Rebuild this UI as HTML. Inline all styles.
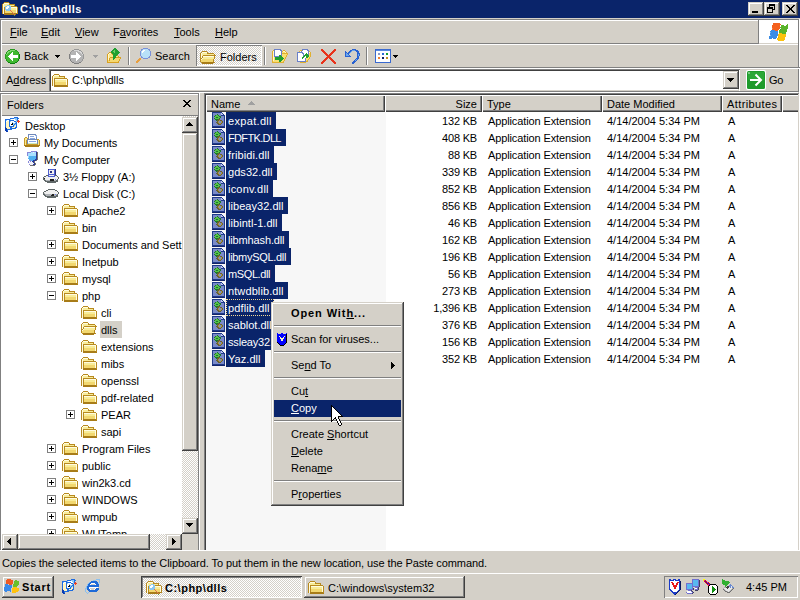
<!DOCTYPE html>
<html><head><meta charset="utf-8"><style>
html,body{margin:0;padding:0;width:800px;height:600px;overflow:hidden;background:#D4D0C8;}
body{position:relative;font-family:"Liberation Sans", sans-serif;font-size:11px;color:#000;}
.t{position:absolute;white-space:nowrap;}
.sel{background:#0A246A;color:#fff;}
u{text-decoration:underline;text-underline-offset:1px;}
</style></head><body>
<svg width="0" height="0" style="position:absolute">
<symbol id="folder" viewBox="0 0 16 16" shape-rendering="crispEdges"><rect x="2" y="2" width="5" height="1" fill="#B88A20"/><rect x="1" y="3" width="1" height="1" fill="#B88A20"/><rect x="2" y="3" width="5" height="1" fill="#FFFCE0"/><rect x="7" y="3" width="1" height="1" fill="#B88A20"/><rect x="0" y="4" width="1" height="1" fill="#B88A20"/><rect x="1" y="4" width="1" height="1" fill="#FFFCE0"/><rect x="2" y="4" width="5" height="1" fill="#F8EC98"/><rect x="7" y="4" width="6" height="1" fill="#B88A20"/><rect x="0" y="5" width="1" height="1" fill="#B88A20"/><rect x="1" y="5" width="1" height="1" fill="#FFFCE0"/><rect x="2" y="5" width="10" height="1" fill="#F8EC98"/><rect x="12" y="5" width="1" height="1" fill="#B88A20"/><rect x="0" y="6" width="1" height="1" fill="#B88A20"/><rect x="1" y="6" width="1" height="1" fill="#FFFCE0"/><rect x="2" y="6" width="13" height="1" fill="#B88A20"/><rect x="0" y="7" width="1" height="1" fill="#B88A20"/><rect x="1" y="7" width="1" height="1" fill="#FFFCE0"/><rect x="2" y="7" width="1" height="1" fill="#B88A20"/><rect x="3" y="7" width="12" height="1" fill="#FFFCE0"/><rect x="15" y="7" width="1" height="1" fill="#B88A20"/><rect x="0" y="8" width="1" height="1" fill="#B88A20"/><rect x="1" y="8" width="1" height="1" fill="#FFFCE0"/><rect x="2" y="8" width="1" height="1" fill="#B88A20"/><rect x="3" y="8" width="11" height="1" fill="#F8EC98"/><rect x="14" y="8" width="1" height="1" fill="#FFFCE0"/><rect x="15" y="8" width="1" height="1" fill="#B88A20"/><rect x="0" y="9" width="1" height="1" fill="#B88A20"/><rect x="1" y="9" width="1" height="1" fill="#FFFCE0"/><rect x="2" y="9" width="1" height="1" fill="#B88A20"/><rect x="3" y="9" width="11" height="1" fill="#F8EC98"/><rect x="14" y="9" width="1" height="1" fill="#FFFCE0"/><rect x="15" y="9" width="1" height="1" fill="#B88A20"/><rect x="0" y="10" width="1" height="1" fill="#B88A20"/><rect x="1" y="10" width="1" height="1" fill="#FFFCE0"/><rect x="2" y="10" width="1" height="1" fill="#B88A20"/><rect x="3" y="10" width="11" height="1" fill="#F2D870"/><rect x="14" y="10" width="1" height="1" fill="#FFFCE0"/><rect x="15" y="10" width="1" height="1" fill="#B88A20"/><rect x="0" y="11" width="1" height="1" fill="#B88A20"/><rect x="1" y="11" width="1" height="1" fill="#FFFCE0"/><rect x="2" y="11" width="1" height="1" fill="#B88A20"/><rect x="3" y="11" width="11" height="1" fill="#F2D870"/><rect x="14" y="11" width="1" height="1" fill="#FFFCE0"/><rect x="15" y="11" width="1" height="1" fill="#B88A20"/><rect x="0" y="12" width="1" height="1" fill="#B88A20"/><rect x="1" y="12" width="1" height="1" fill="#FFFCE0"/><rect x="2" y="12" width="1" height="1" fill="#B88A20"/><rect x="3" y="12" width="11" height="1" fill="#F2D870"/><rect x="14" y="12" width="1" height="1" fill="#FFFCE0"/><rect x="15" y="12" width="1" height="1" fill="#B88A20"/><rect x="0" y="13" width="1" height="1" fill="#B88A20"/><rect x="1" y="13" width="1" height="1" fill="#FFFCE0"/><rect x="2" y="13" width="13" height="1" fill="#A87C18"/><rect x="15" y="13" width="1" height="1" fill="#B88A20"/><rect x="2" y="14" width="14" height="1" fill="#A87C18"/></symbol>
<symbol id="folderopen" viewBox="0 0 16 16" shape-rendering="crispEdges"><rect x="2" y="1" width="5" height="1" fill="#B88A20"/><rect x="1" y="2" width="1" height="1" fill="#B88A20"/><rect x="2" y="2" width="5" height="1" fill="#FFFCE0"/><rect x="7" y="2" width="1" height="1" fill="#B88A20"/><rect x="0" y="3" width="1" height="1" fill="#B88A20"/><rect x="1" y="3" width="1" height="1" fill="#FFFCE0"/><rect x="2" y="3" width="5" height="1" fill="#F8EC98"/><rect x="7" y="3" width="7" height="1" fill="#B88A20"/><rect x="0" y="4" width="1" height="1" fill="#B88A20"/><rect x="1" y="4" width="1" height="1" fill="#FFFCE0"/><rect x="2" y="4" width="12" height="1" fill="#F8EC98"/><rect x="14" y="4" width="1" height="1" fill="#B88A20"/><rect x="0" y="5" width="1" height="1" fill="#B88A20"/><rect x="1" y="5" width="1" height="1" fill="#FFFCE0"/><rect x="2" y="5" width="1" height="1" fill="#F8EC98"/><rect x="3" y="5" width="13" height="1" fill="#B88A20"/><rect x="0" y="6" width="1" height="1" fill="#B88A20"/><rect x="1" y="6" width="1" height="1" fill="#FFFCE0"/><rect x="2" y="6" width="1" height="1" fill="#B88A20"/><rect x="3" y="6" width="11" height="1" fill="#FFFCE0"/><rect x="14" y="6" width="1" height="1" fill="#B88A20"/><rect x="0" y="7" width="1" height="1" fill="#B88A20"/><rect x="1" y="7" width="1" height="1" fill="#FFFCE0"/><rect x="2" y="7" width="1" height="1" fill="#B88A20"/><rect x="3" y="7" width="11" height="1" fill="#F8EC98"/><rect x="14" y="7" width="1" height="1" fill="#B88A20"/><rect x="0" y="8" width="2" height="1" fill="#B88A20"/><rect x="2" y="8" width="1" height="1" fill="#FFFCE0"/><rect x="3" y="8" width="11" height="1" fill="#F8EC98"/><rect x="14" y="8" width="1" height="1" fill="#B88A20"/><rect x="0" y="9" width="1" height="1" fill="#B88A20"/><rect x="1" y="9" width="1" height="1" fill="#FFFCE0"/><rect x="2" y="9" width="11" height="1" fill="#F2D870"/><rect x="13" y="9" width="1" height="1" fill="#B88A20"/><rect x="0" y="10" width="1" height="1" fill="#B88A20"/><rect x="1" y="10" width="12" height="1" fill="#F2D870"/><rect x="13" y="10" width="1" height="1" fill="#B88A20"/><rect x="0" y="11" width="1" height="1" fill="#B88A20"/><rect x="1" y="11" width="12" height="1" fill="#F2D870"/><rect x="13" y="11" width="1" height="1" fill="#B88A20"/><rect x="1" y="12" width="1" height="1" fill="#B88A20"/><rect x="2" y="12" width="12" height="1" fill="#A87C18"/><rect x="14" y="12" width="1" height="1" fill="#B88A20"/><rect x="2" y="13" width="11" height="1" fill="#A87C18"/></symbol>
<symbol id="dll" viewBox="0 0 16 16" shape-rendering="crispEdges"><rect x="1" y="0" width="10" height="1" fill="#1E3A8A"/><rect x="1" y="1" width="1" height="1" fill="#1E3A8A"/><rect x="2" y="1" width="8" height="1" fill="#7A8AC8"/><rect x="10" y="1" width="1" height="1" fill="#B8C4F0"/><rect x="11" y="1" width="1" height="1" fill="#1E3A8A"/><rect x="1" y="2" width="1" height="1" fill="#1E3A8A"/><rect x="2" y="2" width="4" height="1" fill="#7A8AC8"/><rect x="6" y="2" width="1" height="1" fill="#1A7A2A"/><rect x="7" y="2" width="3" height="1" fill="#7A8AC8"/><rect x="10" y="2" width="2" height="1" fill="#B8C4F0"/><rect x="12" y="2" width="1" height="1" fill="#1E3A8A"/><rect x="1" y="3" width="1" height="1" fill="#1E3A8A"/><rect x="2" y="3" width="2" height="1" fill="#7A8AC8"/><rect x="4" y="3" width="1" height="1" fill="#1A7A2A"/><rect x="5" y="3" width="2" height="1" fill="#58C048"/><rect x="7" y="3" width="1" height="1" fill="#1A7A2A"/><rect x="8" y="3" width="2" height="1" fill="#7A8AC8"/><rect x="10" y="3" width="4" height="1" fill="#1E3A8A"/><rect x="1" y="4" width="1" height="1" fill="#1E3A8A"/><rect x="2" y="4" width="1" height="1" fill="#7A8AC8"/><rect x="3" y="4" width="1" height="1" fill="#1A7A2A"/><rect x="4" y="4" width="4" height="1" fill="#58C048"/><rect x="8" y="4" width="2" height="1" fill="#1A7A2A"/><rect x="10" y="4" width="3" height="1" fill="#7A8AC8"/><rect x="13" y="4" width="1" height="1" fill="#1E3A8A"/><rect x="1" y="5" width="1" height="1" fill="#1E3A8A"/><rect x="2" y="5" width="2" height="1" fill="#7A8AC8"/><rect x="4" y="5" width="1" height="1" fill="#58C048"/><rect x="5" y="5" width="2" height="1" fill="#1A7A2A"/><rect x="7" y="5" width="2" height="1" fill="#58C048"/><rect x="9" y="5" width="1" height="1" fill="#1A7A2A"/><rect x="10" y="5" width="3" height="1" fill="#7A8AC8"/><rect x="13" y="5" width="1" height="1" fill="#1E3A8A"/><rect x="1" y="6" width="1" height="1" fill="#1E3A8A"/><rect x="2" y="6" width="1" height="1" fill="#7A8AC8"/><rect x="3" y="6" width="1" height="1" fill="#1A7A2A"/><rect x="4" y="6" width="4" height="1" fill="#58C048"/><rect x="8" y="6" width="1" height="1" fill="#1A7A2A"/><rect x="9" y="6" width="4" height="1" fill="#7A8AC8"/><rect x="13" y="6" width="1" height="1" fill="#1E3A8A"/><rect x="1" y="7" width="1" height="1" fill="#1E3A8A"/><rect x="2" y="7" width="2" height="1" fill="#7A8AC8"/><rect x="4" y="7" width="3" height="1" fill="#1A7A2A"/><rect x="7" y="7" width="2" height="1" fill="#6A6030"/><rect x="9" y="7" width="4" height="1" fill="#7A8AC8"/><rect x="13" y="7" width="1" height="1" fill="#1E3A8A"/><rect x="1" y="8" width="1" height="1" fill="#1E3A8A"/><rect x="2" y="8" width="3" height="1" fill="#7A8AC8"/><rect x="5" y="8" width="1" height="1" fill="#1A7A2A"/><rect x="6" y="8" width="2" height="1" fill="#6A6030"/><rect x="8" y="8" width="1" height="1" fill="#A89848"/><rect x="9" y="8" width="2" height="1" fill="#6A6030"/><rect x="11" y="8" width="2" height="1" fill="#7A8AC8"/><rect x="13" y="8" width="1" height="1" fill="#1E3A8A"/><rect x="1" y="9" width="1" height="1" fill="#1E3A8A"/><rect x="2" y="9" width="4" height="1" fill="#7A8AC8"/><rect x="6" y="9" width="1" height="1" fill="#6A6030"/><rect x="7" y="9" width="1" height="1" fill="#A89848"/><rect x="8" y="9" width="2" height="1" fill="#7A8AC8"/><rect x="10" y="9" width="1" height="1" fill="#A89848"/><rect x="11" y="9" width="1" height="1" fill="#6A6030"/><rect x="12" y="9" width="1" height="1" fill="#7A8AC8"/><rect x="13" y="9" width="1" height="1" fill="#1E3A8A"/><rect x="1" y="10" width="1" height="1" fill="#1E3A8A"/><rect x="2" y="10" width="3" height="1" fill="#7A8AC8"/><rect x="5" y="10" width="2" height="1" fill="#6A6030"/><rect x="7" y="10" width="1" height="1" fill="#A89848"/><rect x="8" y="10" width="2" height="1" fill="#7A8AC8"/><rect x="10" y="10" width="1" height="1" fill="#A89848"/><rect x="11" y="10" width="1" height="1" fill="#6A6030"/><rect x="12" y="10" width="1" height="1" fill="#7A8AC8"/><rect x="13" y="10" width="1" height="1" fill="#1E3A8A"/><rect x="1" y="11" width="1" height="1" fill="#1E3A8A"/><rect x="2" y="11" width="4" height="1" fill="#7A8AC8"/><rect x="6" y="11" width="2" height="1" fill="#6A6030"/><rect x="8" y="11" width="2" height="1" fill="#A89848"/><rect x="10" y="11" width="1" height="1" fill="#6A6030"/><rect x="11" y="11" width="2" height="1" fill="#7A8AC8"/><rect x="13" y="11" width="1" height="1" fill="#1E3A8A"/><rect x="1" y="12" width="1" height="1" fill="#1E3A8A"/><rect x="2" y="12" width="5" height="1" fill="#7A8AC8"/><rect x="7" y="12" width="3" height="1" fill="#6A6030"/><rect x="10" y="12" width="3" height="1" fill="#7A8AC8"/><rect x="13" y="12" width="1" height="1" fill="#1E3A8A"/><rect x="1" y="13" width="1" height="1" fill="#1E3A8A"/><rect x="2" y="13" width="11" height="1" fill="#7A8AC8"/><rect x="13" y="13" width="1" height="1" fill="#1E3A8A"/><rect x="1" y="14" width="13" height="1" fill="#1E3A8A"/><rect x="1" y="15" width="13" height="1" fill="#14246A"/></symbol>
<symbol id="explorer" viewBox="0 0 16 16" shape-rendering="crispEdges"><rect x="2" y="0" width="5" height="1" fill="#B88A20"/><rect x="1" y="1" width="1" height="1" fill="#B88A20"/><rect x="2" y="1" width="5" height="1" fill="#FFFCE0"/><rect x="7" y="1" width="1" height="1" fill="#B88A20"/><rect x="0" y="2" width="1" height="1" fill="#B88A20"/><rect x="1" y="2" width="1" height="1" fill="#FFFCE0"/><rect x="2" y="2" width="5" height="1" fill="#F8EC98"/><rect x="7" y="2" width="6" height="1" fill="#B88A20"/><rect x="0" y="3" width="1" height="1" fill="#B88A20"/><rect x="1" y="3" width="1" height="1" fill="#FFFCE0"/><rect x="2" y="3" width="3" height="1" fill="#F8EC98"/><rect x="5" y="3" width="3" height="1" fill="#8CC8F0"/><rect x="8" y="3" width="4" height="1" fill="#F8EC98"/><rect x="12" y="3" width="1" height="1" fill="#B88A20"/><rect x="0" y="4" width="1" height="1" fill="#B88A20"/><rect x="1" y="4" width="1" height="1" fill="#FFFCE0"/><rect x="2" y="4" width="1" height="1" fill="#F8EC98"/><rect x="3" y="4" width="2" height="1" fill="#8CC8F0"/><rect x="5" y="4" width="2" height="1" fill="#FFFFFF"/><rect x="7" y="4" width="2" height="1" fill="#8CC8F0"/><rect x="9" y="4" width="6" height="1" fill="#B88A20"/><rect x="0" y="5" width="1" height="1" fill="#B88A20"/><rect x="1" y="5" width="1" height="1" fill="#FFFCE0"/><rect x="2" y="5" width="1" height="1" fill="#B88A20"/><rect x="3" y="5" width="1" height="1" fill="#8CC8F0"/><rect x="4" y="5" width="3" height="1" fill="#FFFFFF"/><rect x="7" y="5" width="2" height="1" fill="#8CC8F0"/><rect x="9" y="5" width="6" height="1" fill="#FFFCE0"/><rect x="15" y="5" width="1" height="1" fill="#B88A20"/><rect x="0" y="6" width="1" height="1" fill="#B88A20"/><rect x="1" y="6" width="1" height="1" fill="#FFFCE0"/><rect x="2" y="6" width="1" height="1" fill="#B88A20"/><rect x="3" y="6" width="1" height="1" fill="#8CC8F0"/><rect x="4" y="6" width="2" height="1" fill="#FFFFFF"/><rect x="6" y="6" width="3" height="1" fill="#8CC8F0"/><rect x="9" y="6" width="5" height="1" fill="#F8EC98"/><rect x="14" y="6" width="1" height="1" fill="#FFFCE0"/><rect x="15" y="6" width="1" height="1" fill="#B88A20"/><rect x="0" y="7" width="1" height="1" fill="#B88A20"/><rect x="1" y="7" width="1" height="1" fill="#FFFCE0"/><rect x="2" y="7" width="1" height="1" fill="#B88A20"/><rect x="3" y="7" width="6" height="1" fill="#8CC8F0"/><rect x="9" y="7" width="5" height="1" fill="#F8EC98"/><rect x="14" y="7" width="1" height="1" fill="#FFFCE0"/><rect x="15" y="7" width="1" height="1" fill="#B88A20"/><rect x="0" y="8" width="1" height="1" fill="#B88A20"/><rect x="1" y="8" width="1" height="1" fill="#FFFCE0"/><rect x="2" y="8" width="1" height="1" fill="#B88A20"/><rect x="3" y="8" width="1" height="1" fill="#F8EC98"/><rect x="4" y="8" width="4" height="1" fill="#8CC8F0"/><rect x="8" y="8" width="1" height="1" fill="#E07050"/><rect x="9" y="8" width="5" height="1" fill="#F2D870"/><rect x="14" y="8" width="1" height="1" fill="#FFFCE0"/><rect x="15" y="8" width="1" height="1" fill="#B88A20"/><rect x="0" y="9" width="1" height="1" fill="#B88A20"/><rect x="1" y="9" width="1" height="1" fill="#FFFCE0"/><rect x="2" y="9" width="1" height="1" fill="#B88A20"/><rect x="3" y="9" width="6" height="1" fill="#F2D870"/><rect x="9" y="9" width="1" height="1" fill="#E07050"/><rect x="10" y="9" width="4" height="1" fill="#F2D870"/><rect x="14" y="9" width="1" height="1" fill="#FFFCE0"/><rect x="15" y="9" width="1" height="1" fill="#B88A20"/><rect x="0" y="10" width="1" height="1" fill="#B88A20"/><rect x="1" y="10" width="1" height="1" fill="#FFFCE0"/><rect x="2" y="10" width="1" height="1" fill="#B88A20"/><rect x="3" y="10" width="7" height="1" fill="#F2D870"/><rect x="10" y="10" width="1" height="1" fill="#E07050"/><rect x="11" y="10" width="3" height="1" fill="#F2D870"/><rect x="14" y="10" width="1" height="1" fill="#FFFCE0"/><rect x="15" y="10" width="1" height="1" fill="#B88A20"/><rect x="0" y="11" width="1" height="1" fill="#B88A20"/><rect x="1" y="11" width="1" height="1" fill="#FFFCE0"/><rect x="2" y="11" width="9" height="1" fill="#A87C18"/><rect x="11" y="11" width="1" height="1" fill="#E07050"/><rect x="12" y="11" width="3" height="1" fill="#A87C18"/><rect x="15" y="11" width="1" height="1" fill="#B88A20"/><rect x="2" y="12" width="10" height="1" fill="#A87C18"/><rect x="12" y="12" width="1" height="1" fill="#E07050"/><rect x="13" y="12" width="1" height="1" fill="#A87C18"/><rect x="12" y="13" width="1" height="1" fill="#60A040"/></symbol>
<symbol id="back" viewBox="0 0 16 16">
 <circle cx="8" cy="8" r="7.5" fill="#3CAA28" shape-rendering="auto"/>
 <circle cx="8" cy="7.2" r="6" fill="#6ACB4A" shape-rendering="auto"/>
 <path d="M3 8l4-4v2.5h6v3H7V12z" fill="#fff" shape-rendering="auto"/>
</symbol>
<symbol id="fwd" viewBox="0 0 16 16">
 <circle cx="8" cy="8" r="7.5" fill="#A8A8A8" shape-rendering="auto"/>
 <circle cx="8" cy="7.2" r="6" fill="#C4C4C4" shape-rendering="auto"/>
 <path d="M13 8L9 4v2.5H3v3h6V12z" fill="#fff" shape-rendering="auto"/>
</symbol>
<symbol id="up" viewBox="0 0 16 16">
 <path d="M0.5 15.5V5.5l1-1h4l1 1h3v2" fill="#F4DF8E" stroke="#B0841A"/>
 <path d="M1.5 15.5l2-7h9l-2 7z" fill="#F3D06C" stroke="#B0841A" shape-rendering="auto"/>
 <path d="M11 0L16 5h-3v6h-4V5H6z" fill="#2E9E3C" shape-rendering="auto"/>
 <path d="M11 1.4L14 4.5h-2v5.5h-2V4.5H8z" fill="#5CC85A" shape-rendering="auto"/>
</symbol>
<symbol id="search" viewBox="0 0 16 16">
 <path d="M1.5 14.5l5-5" stroke="#C87A30" stroke-width="2.6" shape-rendering="auto"/>
 <circle cx="10" cy="6" r="5" fill="#5A8AD0" shape-rendering="auto"/>
 <circle cx="10" cy="6" r="3.8" fill="#D6ECFF" shape-rendering="auto"/>
 <circle cx="9" cy="5" r="1.6" fill="#fff" shape-rendering="auto"/>
</symbol>
<symbol id="moveto" viewBox="0 0 16 16">
 <path d="M0.5 14.5V4.5l1-1h4l1 1h7v2" fill="#F4DF8E" stroke="#B0841A"/>
 <rect x="3.5" y="1.5" width="6" height="8" fill="#fff" stroke="#6A80B0"/>
 <path d="M1.5 14.5l2-7h11l-2 7z" fill="#F3D06C" stroke="#B0841A" shape-rendering="auto"/>
 <path d="M6 9h4V6.5l5 4-5 4V12H6z" fill="#2E9E3C" shape-rendering="auto"/>
</symbol>
<symbol id="copyto" viewBox="0 0 16 16">
 <path d="M4.5 14.5V4.5l1-1h4l1 1h4v2" fill="#F4DF8E" stroke="#B0841A"/>
 <rect x="1.5" y="1.5" width="6" height="8" fill="#fff" stroke="#6A80B0"/>
 <rect x="3.5" y="4.5" width="6" height="9" fill="#fff" stroke="#6A80B0"/>
 <path d="M6.5 14.5l2-7h7l-2 7z" fill="#F3D06C" stroke="#B0841A" shape-rendering="auto"/>
 <path d="M8 9h3V7l4 3.5-4 3.5v-2H8z" fill="#2E9E3C" shape-rendering="auto"/>
</symbol>
<symbol id="del" viewBox="0 0 16 16">
 <path d="M2 2l12 12M14 2L2 14" stroke="#E0301E" stroke-width="2.4" shape-rendering="auto"/>
</symbol>
<symbol id="undo" viewBox="0 0 16 16">
 <path d="M3.5 4.5C7 1 14 2.5 13.5 8.5 13 12 10 14 7.5 14.5" fill="none" stroke="#2E6AD0" stroke-width="2.6" shape-rendering="auto"/>
 <path d="M1 1v8h7z" fill="#2E6AD0" shape-rendering="auto"/>
</symbol>
<symbol id="views" viewBox="0 0 16 16">
 <rect x="0.5" y="1.5" width="15" height="13" fill="#fff" stroke="#2E5AB8"/>
 <rect x="1" y="2" width="14" height="2" fill="#3A6AD0"/>
 <rect x="3" y="6" width="2" height="2" fill="#E04030"/><rect x="7" y="6" width="2" height="2" fill="#30A040"/><rect x="11" y="6" width="2" height="2" fill="#3A6AD0"/>
 <rect x="3" y="10" width="2" height="2" fill="#E0A020"/><rect x="7" y="10" width="2" height="2" fill="#3A6AD0"/><rect x="11" y="10" width="2" height="2" fill="#E04030"/>
</symbol>
<symbol id="desktop" viewBox="0 0 16 16" shape-rendering="crispEdges"><rect x="9" y="0" width="4" height="1" fill="#1E6CE0"/><rect x="5" y="1" width="4" height="1" fill="#1E6CE0"/><rect x="9" y="1" width="3" height="1" fill="#8AC8F8"/><rect x="12" y="1" width="2" height="1" fill="#1E6CE0"/><rect x="0" y="2" width="5" height="1" fill="#1E6CE0"/><rect x="5" y="2" width="1" height="1" fill="#8AC8F8"/><rect x="6" y="2" width="4" height="1" fill="#FFFFFF"/><rect x="10" y="2" width="2" height="1" fill="#8AC8F8"/><rect x="12" y="2" width="1" height="1" fill="#1E6CE0"/><rect x="0" y="3" width="1" height="1" fill="#1E6CE0"/><rect x="1" y="3" width="1" height="1" fill="#8AC8F8"/><rect x="2" y="3" width="2" height="1" fill="#FFFFFF"/><rect x="4" y="3" width="5" height="1" fill="#1E6CE0"/><rect x="9" y="3" width="2" height="1" fill="#FFFFFF"/><rect x="11" y="3" width="1" height="1" fill="#8AC8F8"/><rect x="12" y="3" width="1" height="1" fill="#1E6CE0"/><rect x="13" y="3" width="1" height="1" fill="#F04020"/><rect x="0" y="4" width="1" height="1" fill="#1E6CE0"/><rect x="1" y="4" width="1" height="1" fill="#FFFFFF"/><rect x="2" y="4" width="2" height="1" fill="#FFF4C0"/><rect x="4" y="4" width="1" height="1" fill="#1E6CE0"/><rect x="5" y="4" width="1" height="1" fill="#8AC8F8"/><rect x="6" y="4" width="3" height="1" fill="#FFFFFF"/><rect x="9" y="4" width="2" height="1" fill="#1E6CE0"/><rect x="11" y="4" width="1" height="1" fill="#8AC8F8"/><rect x="12" y="4" width="3" height="1" fill="#F04020"/><rect x="0" y="5" width="1" height="1" fill="#1E6CE0"/><rect x="1" y="5" width="3" height="1" fill="#FFF4C0"/><rect x="4" y="5" width="1" height="1" fill="#1E6CE0"/><rect x="5" y="5" width="2" height="1" fill="#FFFFFF"/><rect x="7" y="5" width="1" height="1" fill="#8AC8F8"/><rect x="8" y="5" width="2" height="1" fill="#FFFFFF"/><rect x="10" y="5" width="1" height="1" fill="#8AC8F8"/><rect x="11" y="5" width="1" height="1" fill="#1E6CE0"/><rect x="13" y="5" width="1" height="1" fill="#F04020"/><rect x="0" y="6" width="1" height="1" fill="#1E6CE0"/><rect x="1" y="6" width="3" height="1" fill="#FFF4C0"/><rect x="4" y="6" width="1" height="1" fill="#1E6CE0"/><rect x="5" y="6" width="2" height="1" fill="#FFFFFF"/><rect x="7" y="6" width="1" height="1" fill="#000000"/><rect x="8" y="6" width="2" height="1" fill="#8AC8F8"/><rect x="10" y="6" width="2" height="1" fill="#1E6CE0"/><rect x="0" y="7" width="1" height="1" fill="#1E6CE0"/><rect x="1" y="7" width="3" height="1" fill="#FFF4C0"/><rect x="4" y="7" width="1" height="1" fill="#1E6CE0"/><rect x="5" y="7" width="1" height="1" fill="#FFFFFF"/><rect x="6" y="7" width="2" height="1" fill="#000000"/><rect x="8" y="7" width="1" height="1" fill="#8AC8F8"/><rect x="9" y="7" width="1" height="1" fill="#1E6CE0"/><rect x="10" y="7" width="1" height="1" fill="#8AC8F8"/><rect x="11" y="7" width="1" height="1" fill="#1E6CE0"/><rect x="0" y="8" width="1" height="1" fill="#1E6CE0"/><rect x="1" y="8" width="3" height="1" fill="#FFF4C0"/><rect x="4" y="8" width="1" height="1" fill="#1E6CE0"/><rect x="5" y="8" width="3" height="1" fill="#FFFFFF"/><rect x="8" y="8" width="1" height="1" fill="#1E6CE0"/><rect x="9" y="8" width="1" height="1" fill="#8AC8F8"/><rect x="10" y="8" width="1" height="1" fill="#FFF4C0"/><rect x="11" y="8" width="1" height="1" fill="#1E6CE0"/><rect x="0" y="9" width="1" height="1" fill="#1E6CE0"/><rect x="1" y="9" width="3" height="1" fill="#FFF4C0"/><rect x="4" y="9" width="5" height="1" fill="#1E6CE0"/><rect x="9" y="9" width="2" height="1" fill="#FFF4C0"/><rect x="11" y="9" width="1" height="1" fill="#1E6CE0"/><rect x="0" y="10" width="1" height="1" fill="#0A3AB0"/><rect x="1" y="10" width="4" height="1" fill="#FFF4C0"/><rect x="5" y="10" width="2" height="1" fill="#1E6CE0"/><rect x="7" y="10" width="3" height="1" fill="#FFF4C0"/><rect x="10" y="10" width="2" height="1" fill="#1E6CE0"/><rect x="0" y="11" width="2" height="1" fill="#0A3AB0"/><rect x="2" y="11" width="3" height="1" fill="#FFF4C0"/><rect x="5" y="11" width="6" height="1" fill="#1E6CE0"/><rect x="0" y="12" width="2" height="1" fill="#0A3AB0"/><rect x="2" y="12" width="5" height="1" fill="#1E6CE0"/><rect x="0" y="13" width="2" height="1" fill="#0A3AB0"/><rect x="2" y="13" width="1" height="1" fill="#1E6CE0"/><rect x="1" y="14" width="2" height="1" fill="#0A3AB0"/></symbol>
<symbol id="mydocs" viewBox="0 0 16 16" shape-rendering="crispEdges"><rect x="4" y="0" width="8" height="1" fill="#7088B8"/><rect x="4" y="1" width="1" height="1" fill="#7088B8"/><rect x="5" y="1" width="6" height="1" fill="#FFFFFF"/><rect x="11" y="1" width="2" height="1" fill="#88A8E0"/><rect x="4" y="2" width="1" height="1" fill="#7088B8"/><rect x="5" y="2" width="1" height="1" fill="#FFFFFF"/><rect x="6" y="2" width="4" height="1" fill="#88A8E0"/><rect x="10" y="2" width="2" height="1" fill="#FFFFFF"/><rect x="12" y="2" width="1" height="1" fill="#88A8E0"/><rect x="1" y="3" width="2" height="1" fill="#C89A28"/><rect x="4" y="3" width="1" height="1" fill="#7088B8"/><rect x="5" y="3" width="7" height="1" fill="#FFFFFF"/><rect x="12" y="3" width="1" height="1" fill="#7088B8"/><rect x="0" y="4" width="1" height="1" fill="#C89A28"/><rect x="1" y="4" width="2" height="1" fill="#F8E890"/><rect x="3" y="4" width="1" height="1" fill="#C89A28"/><rect x="4" y="4" width="1" height="1" fill="#7088B8"/><rect x="5" y="4" width="1" height="1" fill="#FFFFFF"/><rect x="6" y="4" width="5" height="1" fill="#88A8E0"/><rect x="11" y="4" width="1" height="1" fill="#FFFFFF"/><rect x="12" y="4" width="1" height="1" fill="#7088B8"/><rect x="0" y="5" width="1" height="1" fill="#C89A28"/><rect x="1" y="5" width="2" height="1" fill="#F8E890"/><rect x="3" y="5" width="10" height="1" fill="#7088B8"/><rect x="13" y="5" width="2" height="1" fill="#C89A28"/><rect x="0" y="6" width="1" height="1" fill="#C89A28"/><rect x="1" y="6" width="1" height="1" fill="#F8E890"/><rect x="2" y="6" width="1" height="1" fill="#C89A28"/><rect x="3" y="6" width="1" height="1" fill="#7088B8"/><rect x="4" y="6" width="9" height="1" fill="#FFFFFF"/><rect x="13" y="6" width="1" height="1" fill="#7088B8"/><rect x="14" y="6" width="1" height="1" fill="#F8E890"/><rect x="15" y="6" width="1" height="1" fill="#C89A28"/><rect x="0" y="7" width="1" height="1" fill="#C89A28"/><rect x="1" y="7" width="1" height="1" fill="#F8E890"/><rect x="2" y="7" width="1" height="1" fill="#C89A28"/><rect x="3" y="7" width="1" height="1" fill="#7088B8"/><rect x="4" y="7" width="1" height="1" fill="#FFFFFF"/><rect x="5" y="7" width="7" height="1" fill="#88A8E0"/><rect x="12" y="7" width="1" height="1" fill="#FFFFFF"/><rect x="13" y="7" width="1" height="1" fill="#7088B8"/><rect x="14" y="7" width="1" height="1" fill="#F8E890"/><rect x="15" y="7" width="1" height="1" fill="#C89A28"/><rect x="0" y="8" width="1" height="1" fill="#C89A28"/><rect x="1" y="8" width="1" height="1" fill="#F8E890"/><rect x="2" y="8" width="1" height="1" fill="#C89A28"/><rect x="3" y="8" width="1" height="1" fill="#7088B8"/><rect x="4" y="8" width="9" height="1" fill="#FFFFFF"/><rect x="13" y="8" width="1" height="1" fill="#7088B8"/><rect x="14" y="8" width="1" height="1" fill="#F8E890"/><rect x="15" y="8" width="1" height="1" fill="#C89A28"/><rect x="0" y="9" width="1" height="1" fill="#C89A28"/><rect x="1" y="9" width="1" height="1" fill="#F8E890"/><rect x="2" y="9" width="1" height="1" fill="#C89A28"/><rect x="3" y="9" width="1" height="1" fill="#7088B8"/><rect x="4" y="9" width="9" height="1" fill="#C8E8C0"/><rect x="13" y="9" width="1" height="1" fill="#7088B8"/><rect x="14" y="9" width="1" height="1" fill="#F8E890"/><rect x="15" y="9" width="1" height="1" fill="#C89A28"/><rect x="0" y="10" width="1" height="1" fill="#C89A28"/><rect x="1" y="10" width="1" height="1" fill="#F8E890"/><rect x="2" y="10" width="12" height="1" fill="#C89A28"/><rect x="14" y="10" width="1" height="1" fill="#F8E890"/><rect x="15" y="10" width="1" height="1" fill="#C89A28"/><rect x="0" y="11" width="16" height="1" fill="#A87C18"/><rect x="1" y="12" width="14" height="1" fill="#A87C18"/></symbol>
<symbol id="mycomp" viewBox="0 0 16 16" shape-rendering="crispEdges"><rect x="7" y="0" width="6" height="1" fill="#8888D8"/><rect x="3" y="1" width="4" height="1" fill="#8888D8"/><rect x="7" y="1" width="2" height="1" fill="#A8E0FF"/><rect x="9" y="1" width="1" height="1" fill="#F0F0F8"/><rect x="10" y="1" width="2" height="1" fill="#A8E0FF"/><rect x="12" y="1" width="1" height="1" fill="#2A3A98"/><rect x="13" y="1" width="1" height="1" fill="#707070"/><rect x="3" y="2" width="1" height="1" fill="#8888D8"/><rect x="4" y="2" width="8" height="1" fill="#A8E0FF"/><rect x="12" y="2" width="1" height="1" fill="#2A3A98"/><rect x="13" y="2" width="1" height="1" fill="#707070"/><rect x="3" y="3" width="1" height="1" fill="#8888D8"/><rect x="4" y="3" width="8" height="1" fill="#A8E0FF"/><rect x="12" y="3" width="1" height="1" fill="#2A3A98"/><rect x="13" y="3" width="1" height="1" fill="#707070"/><rect x="3" y="4" width="1" height="1" fill="#8888D8"/><rect x="4" y="4" width="8" height="1" fill="#A8E0FF"/><rect x="12" y="4" width="1" height="1" fill="#2A3A98"/><rect x="13" y="4" width="1" height="1" fill="#707070"/><rect x="4" y="5" width="1" height="1" fill="#A8E0FF"/><rect x="5" y="5" width="7" height="1" fill="#50B0F0"/><rect x="12" y="5" width="1" height="1" fill="#2A3A98"/><rect x="13" y="5" width="1" height="1" fill="#707070"/><rect x="4" y="6" width="1" height="1" fill="#A8E0FF"/><rect x="5" y="6" width="7" height="1" fill="#50B0F0"/><rect x="12" y="6" width="1" height="1" fill="#2A3A98"/><rect x="13" y="6" width="1" height="1" fill="#707070"/><rect x="4" y="7" width="8" height="1" fill="#50B0F0"/><rect x="12" y="7" width="1" height="1" fill="#2A3A98"/><rect x="13" y="7" width="1" height="1" fill="#707070"/><rect x="5" y="8" width="6" height="1" fill="#50B0F0"/><rect x="11" y="8" width="2" height="1" fill="#2A3A98"/><rect x="13" y="8" width="1" height="1" fill="#707070"/><rect x="5" y="9" width="2" height="1" fill="#8888D8"/><rect x="7" y="9" width="2" height="1" fill="#50B0F0"/><rect x="9" y="9" width="3" height="1" fill="#2A3A98"/><rect x="12" y="9" width="1" height="1" fill="#707070"/><rect x="4" y="10" width="1" height="1" fill="#8888D8"/><rect x="6" y="10" width="1" height="1" fill="#8888D8"/><rect x="7" y="10" width="1" height="1" fill="#F0F0F8"/><rect x="8" y="10" width="2" height="1" fill="#2A3A98"/><rect x="10" y="10" width="1" height="1" fill="#707070"/><rect x="4" y="11" width="1" height="1" fill="#8888D8"/><rect x="5" y="11" width="4" height="1" fill="#F0F0F8"/><rect x="9" y="11" width="1" height="1" fill="#2A3A98"/><rect x="10" y="11" width="1" height="1" fill="#707070"/><rect x="5" y="12" width="5" height="1" fill="#F0F0F8"/><rect x="10" y="12" width="1" height="1" fill="#2A3A98"/><rect x="11" y="12" width="1" height="1" fill="#707070"/><rect x="5" y="13" width="1" height="1" fill="#8888D8"/><rect x="6" y="13" width="3" height="1" fill="#F0F0F8"/><rect x="9" y="13" width="2" height="1" fill="#2A3A98"/><rect x="11" y="13" width="1" height="1" fill="#707070"/><rect x="6" y="14" width="5" height="1" fill="#707070"/></symbol>
<symbol id="floppy" viewBox="0 0 16 16" shape-rendering="crispEdges"><rect x="5" y="1" width="1" height="1" fill="#2A3080"/><rect x="6" y="1" width="6" height="1" fill="#5060D0"/><rect x="12" y="1" width="1" height="1" fill="#2A3080"/><rect x="5" y="2" width="1" height="1" fill="#5060D0"/><rect x="6" y="2" width="5" height="1" fill="#F0F0F0"/><rect x="11" y="2" width="1" height="1" fill="#5060D0"/><rect x="12" y="2" width="1" height="1" fill="#2A3080"/><rect x="5" y="3" width="1" height="1" fill="#5060D0"/><rect x="6" y="3" width="1" height="1" fill="#F0F0F0"/><rect x="7" y="3" width="2" height="1" fill="#2A3080"/><rect x="9" y="3" width="2" height="1" fill="#F0F0F0"/><rect x="11" y="3" width="1" height="1" fill="#5060D0"/><rect x="12" y="3" width="1" height="1" fill="#2A3080"/><rect x="5" y="4" width="1" height="1" fill="#5060D0"/><rect x="6" y="4" width="1" height="1" fill="#F0F0F0"/><rect x="7" y="4" width="2" height="1" fill="#2A3080"/><rect x="9" y="4" width="2" height="1" fill="#F0F0F0"/><rect x="11" y="4" width="1" height="1" fill="#5060D0"/><rect x="12" y="4" width="1" height="1" fill="#2A3080"/><rect x="5" y="5" width="1" height="1" fill="#5060D0"/><rect x="6" y="5" width="5" height="1" fill="#F0F0F0"/><rect x="11" y="5" width="1" height="1" fill="#5060D0"/><rect x="12" y="5" width="1" height="1" fill="#2A3080"/><rect x="5" y="6" width="7" height="1" fill="#5060D0"/><rect x="12" y="6" width="1" height="1" fill="#2A3080"/><rect x="3" y="7" width="2" height="1" fill="#606868"/><rect x="5" y="7" width="1" height="1" fill="#5060D0"/><rect x="6" y="7" width="5" height="1" fill="#F0F0F0"/><rect x="11" y="7" width="1" height="1" fill="#5060D0"/><rect x="12" y="7" width="2" height="1" fill="#606868"/><rect x="1" y="8" width="2" height="1" fill="#606868"/><rect x="3" y="8" width="2" height="1" fill="#F0F0F0"/><rect x="5" y="8" width="7" height="1" fill="#5060D0"/><rect x="12" y="8" width="2" height="1" fill="#F0F0F0"/><rect x="14" y="8" width="1" height="1" fill="#606868"/><rect x="0" y="9" width="1" height="1" fill="#606868"/><rect x="1" y="9" width="14" height="1" fill="#F0F0F0"/><rect x="15" y="9" width="1" height="1" fill="#606868"/><rect x="0" y="10" width="1" height="1" fill="#606868"/><rect x="1" y="10" width="1" height="1" fill="#202020"/><rect x="2" y="10" width="13" height="1" fill="#F0F0F0"/><rect x="15" y="10" width="1" height="1" fill="#606868"/><rect x="0" y="11" width="2" height="1" fill="#606868"/><rect x="2" y="11" width="5" height="1" fill="#F0F0F0"/><rect x="7" y="11" width="4" height="1" fill="#202020"/><rect x="11" y="11" width="1" height="1" fill="#F0F0F0"/><rect x="12" y="11" width="1" height="1" fill="#7080E0"/><rect x="13" y="11" width="1" height="1" fill="#F0F0F0"/><rect x="14" y="11" width="1" height="1" fill="#606868"/><rect x="1" y="12" width="2" height="1" fill="#606868"/><rect x="3" y="12" width="4" height="1" fill="#B0B4B8"/><rect x="7" y="12" width="4" height="1" fill="#202020"/><rect x="11" y="12" width="2" height="1" fill="#B0B4B8"/><rect x="13" y="12" width="2" height="1" fill="#606868"/><rect x="2" y="13" width="13" height="1" fill="#606868"/><rect x="4" y="14" width="9" height="1" fill="#606868"/></symbol>
<symbol id="disk" viewBox="0 0 16 16" shape-rendering="crispEdges"><rect x="5" y="4" width="7" height="1" fill="#606868"/><rect x="3" y="5" width="2" height="1" fill="#606868"/><rect x="5" y="5" width="7" height="1" fill="#F0F0F0"/><rect x="12" y="5" width="2" height="1" fill="#606868"/><rect x="1" y="6" width="2" height="1" fill="#606868"/><rect x="3" y="6" width="11" height="1" fill="#F0F0F0"/><rect x="14" y="6" width="1" height="1" fill="#606868"/><rect x="0" y="7" width="1" height="1" fill="#606868"/><rect x="1" y="7" width="14" height="1" fill="#F0F0F0"/><rect x="15" y="7" width="1" height="1" fill="#606868"/><rect x="0" y="8" width="1" height="1" fill="#606868"/><rect x="1" y="8" width="1" height="1" fill="#B0B4B8"/><rect x="2" y="8" width="13" height="1" fill="#F0F0F0"/><rect x="15" y="8" width="1" height="1" fill="#606868"/><rect x="0" y="9" width="2" height="1" fill="#606868"/><rect x="2" y="9" width="7" height="1" fill="#B0B4B8"/><rect x="9" y="9" width="2" height="1" fill="#202020"/><rect x="11" y="9" width="1" height="1" fill="#B0B4B8"/><rect x="12" y="9" width="1" height="1" fill="#7080E0"/><rect x="13" y="9" width="1" height="1" fill="#B0B4B8"/><rect x="14" y="9" width="1" height="1" fill="#606868"/><rect x="1" y="10" width="2" height="1" fill="#606868"/><rect x="3" y="10" width="5" height="1" fill="#B0B4B8"/><rect x="8" y="10" width="3" height="1" fill="#202020"/><rect x="11" y="10" width="2" height="1" fill="#B0B4B8"/><rect x="13" y="10" width="2" height="1" fill="#606868"/><rect x="2" y="11" width="13" height="1" fill="#606868"/><rect x="4" y="12" width="9" height="1" fill="#606868"/></symbol>
<symbol id="winflag" viewBox="0 0 20 20">
 <path d="M1.5 4.5C4 3 6.5 3 9 4.5V10C6.5 8.5 4 8.5 1.5 10z" fill="#F25A22" shape-rendering="auto"/>
 <path d="M10.5 4.8C13 6.2 15.5 6 18.5 4.2V9.8C15.5 11.6 13 11.8 10.5 10.4z" fill="#66B82E" shape-rendering="auto"/>
 <path d="M0.5 11.5C3 10 5.5 10 8 11.5V17C5.5 15.5 3 15.5 0.5 17z" fill="#3A8AEA" shape-rendering="auto"/>
 <path d="M9.5 11.8C12 13.2 14.5 13 17.5 11.2V16.8C14.5 18.6 12 18.8 9.5 17.4z" fill="#FCC418" shape-rendering="auto"/>
</symbol>
<symbol id="shield" viewBox="0 0 16 16">
 <path d="M1.5 2.5L8 0.5l6.5 2v6C14.5 12 11 14.5 8 15.5 5 14.5 1.5 12 1.5 8.5z" fill="#1A3AD0" stroke="#0A1A80" shape-rendering="auto"/>
 <path d="M4.5 4.5h2l1.5 4 1.5-4h2L9 11.5H7z" fill="#fff" shape-rendering="auto"/>
</symbol>
<symbol id="shieldred" viewBox="0 0 16 16">
 <path d="M1.5 2.5L8 0.5l6.5 2v6C14.5 12 11 14.5 8 15.5 5 14.5 1.5 12 1.5 8.5z" fill="#1A3AB0" stroke="#0A1A80" shape-rendering="auto"/>
 <path d="M3.5 3.5L8 2.3l4.5 1.2v5C12.5 11 10 13 8 13.8 6 13 3.5 11 3.5 8.5z" fill="#fff" shape-rendering="auto"/>
 <path d="M5 4.5h2l1 4 1-4h2L9 11.5H7z" fill="#E01818" shape-rendering="auto"/>
</symbol>
<symbol id="ie" viewBox="0 0 16 16">
 <ellipse cx="8" cy="8.5" rx="6.5" ry="6" fill="#2A7AE0" shape-rendering="auto"/>
 <ellipse cx="8" cy="8.5" rx="3.6" ry="3.2" fill="#fff" shape-rendering="auto"/>
 <rect x="4.5" y="7.8" width="7" height="1.6" fill="#2A7AE0"/>
 <rect x="8" y="10.5" width="5" height="3" fill="#2A7AE0"/>
 <path d="M1 13C0 10 9 1 14 1.5 16 2 15 5 13 6" fill="none" stroke="#F0B020" stroke-width="1.2" shape-rendering="auto"/>
</symbol>
<symbol id="net" viewBox="0 0 16 16">
 <rect x="6.5" y="0.5" width="8" height="7" fill="#7AB8F0" stroke="#3A70C0"/>
 <rect x="1.5" y="5.5" width="8" height="7" fill="#7AB8F0" stroke="#3A70C0"/>
 <rect x="2.5" y="13.5" width="6" height="2" fill="#C0C0C0"/>
</symbol>
</svg>
<div style="position:absolute;left:0px;top:0px;width:800px;height:18px;background:#0A246A"></div><svg style="position:absolute;left:2px;top:2px" width="16" height="16"><use href="#explorer"/></svg><div class="t" style="left:20px;top:0px;line-height:18px;color:#fff;font-weight:bold;letter-spacing:0.45px">C:\php\dlls</div><div style="position:absolute;left:748px;top:2px;width:16px;height:14px;background:#D4D0C8;box-shadow:inset -1px -1px #404040, inset 1px 1px #D4D0C8, inset -2px -2px #808080, inset 2px 2px #fff;"></div><div style="position:absolute;left:764px;top:2px;width:16px;height:14px;background:#D4D0C8;box-shadow:inset -1px -1px #404040, inset 1px 1px #D4D0C8, inset -2px -2px #808080, inset 2px 2px #fff;"></div><div style="position:absolute;left:782px;top:2px;width:16px;height:14px;background:#D4D0C8;box-shadow:inset -1px -1px #404040, inset 1px 1px #D4D0C8, inset -2px -2px #808080, inset 2px 2px #fff;"></div><div style="position:absolute;left:752px;top:11px;width:6px;height:2px;background:#000"></div><svg style="position:absolute;left:767px;top:4px" width="8" height="9" viewBox="0 0 8 9" shape-rendering="crispEdges"><rect x="2" y="0" width="6" height="1" fill="#000"/><rect x="2" y="1" width="6" height="1" fill="#000"/><rect x="2" y="2" width="1" height="1" fill="#000"/><rect x="7" y="2" width="1" height="1" fill="#000"/><rect x="0" y="3" width="6" height="1" fill="#000"/><rect x="7" y="3" width="1" height="1" fill="#000"/><rect x="0" y="4" width="6" height="1" fill="#000"/><rect x="7" y="4" width="1" height="1" fill="#000"/><rect x="0" y="5" width="1" height="1" fill="#000"/><rect x="5" y="5" width="3" height="1" fill="#000"/><rect x="0" y="6" width="1" height="1" fill="#000"/><rect x="5" y="6" width="1" height="1" fill="#000"/><rect x="0" y="7" width="1" height="1" fill="#000"/><rect x="5" y="7" width="1" height="1" fill="#000"/><rect x="0" y="8" width="6" height="1" fill="#000"/></svg><svg style="position:absolute;left:786px;top:5px" width="9" height="8" viewBox="0 0 9 8" shape-rendering="crispEdges"><rect x="0" y="0" width="2" height="1" fill="#000"/><rect x="7" y="0" width="2" height="1" fill="#000"/><rect x="1" y="1" width="2" height="1" fill="#000"/><rect x="6" y="1" width="2" height="1" fill="#000"/><rect x="2" y="2" width="2" height="1" fill="#000"/><rect x="5" y="2" width="2" height="1" fill="#000"/><rect x="3" y="3" width="3" height="1" fill="#000"/><rect x="3" y="4" width="3" height="1" fill="#000"/><rect x="2" y="5" width="2" height="1" fill="#000"/><rect x="5" y="5" width="2" height="1" fill="#000"/><rect x="1" y="6" width="2" height="1" fill="#000"/><rect x="6" y="6" width="2" height="1" fill="#000"/><rect x="0" y="7" width="2" height="1" fill="#000"/><rect x="7" y="7" width="2" height="1" fill="#000"/></svg><div style="position:absolute;left:0px;top:18px;width:800px;height:1px;background:#D4D0C8"></div><div style="position:absolute;left:0px;top:19px;width:800px;height:1px;background:#808080"></div><div style="position:absolute;left:0px;top:20px;width:800px;height:1px;background:#fff"></div><div style="position:absolute;left:0px;top:19px;width:1px;height:74px;background:#808080"></div><div style="position:absolute;left:1px;top:20px;width:1px;height:71px;background:#fff"></div><div class="t" style="left:10px;top:24px;line-height:17px;"><u>F</u>ile</div><div class="t" style="left:41px;top:24px;line-height:17px;"><u>E</u>dit</div><div class="t" style="left:75px;top:24px;line-height:17px;"><u>V</u>iew</div><div class="t" style="left:113px;top:24px;line-height:17px;">F<u>a</u>vorites</div><div class="t" style="left:174px;top:24px;line-height:17px;"><u>T</u>ools</div><div class="t" style="left:215px;top:24px;line-height:17px;"><u>H</u>elp</div><div style="position:absolute;left:2px;top:43px;width:757px;height:1px;background:#808080"></div><div style="position:absolute;left:2px;top:44px;width:798px;height:1px;background:#fff"></div><div style="position:absolute;left:758px;top:19px;width:1px;height:25px;background:#808080"></div><div style="position:absolute;left:759px;top:20px;width:39px;height:23px;background:#fff"></div><div style="position:absolute;left:798px;top:19px;width:1px;height:73px;background:#808080"></div><div style="position:absolute;left:799px;top:19px;width:1px;height:74px;background:#fff"></div><svg style="position:absolute;left:769px;top:23px" width="20" height="18" viewBox="0 0 20 18" shape-rendering="crispEdges"><rect x="4" y="0" width="7" height="1" fill="#F4611E"/><rect x="4" y="1" width="8" height="1" fill="#F4611E"/><rect x="18" y="1" width="1" height="1" fill="#5AB42A"/><rect x="3" y="2" width="8" height="1" fill="#F4611E"/><rect x="12" y="2" width="3" height="1" fill="#5AB42A"/><rect x="17" y="2" width="2" height="1" fill="#5AB42A"/><rect x="3" y="3" width="8" height="1" fill="#F4611E"/><rect x="12" y="3" width="7" height="1" fill="#5AB42A"/><rect x="3" y="4" width="8" height="1" fill="#F4611E"/><rect x="11" y="4" width="8" height="1" fill="#5AB42A"/><rect x="3" y="5" width="1" height="1" fill="#F88850"/><rect x="4" y="5" width="7" height="1" fill="#F4611E"/><rect x="12" y="5" width="7" height="1" fill="#5AB42A"/><rect x="3" y="6" width="7" height="1" fill="#F4611E"/><rect x="11" y="6" width="1" height="1" fill="#3A9A20"/><rect x="12" y="6" width="6" height="1" fill="#5AB42A"/><rect x="2" y="7" width="4" height="1" fill="#3C8CE4"/><rect x="6" y="7" width="3" height="1" fill="#F4611E"/><rect x="10" y="7" width="8" height="1" fill="#5AB42A"/><rect x="1" y="8" width="8" height="1" fill="#3C8CE4"/><rect x="10" y="8" width="8" height="1" fill="#5AB42A"/><rect x="1" y="9" width="1" height="1" fill="#7AB8F4"/><rect x="2" y="9" width="7" height="1" fill="#3C8CE4"/><rect x="10" y="9" width="7" height="1" fill="#5AB42A"/><rect x="1" y="10" width="8" height="1" fill="#3C8CE4"/><rect x="10" y="10" width="3" height="1" fill="#FCC10E"/><rect x="13" y="10" width="4" height="1" fill="#5AB42A"/><rect x="1" y="11" width="8" height="1" fill="#3C8CE4"/><rect x="9" y="11" width="8" height="1" fill="#FCC10E"/><rect x="1" y="12" width="1" height="1" fill="#7AB8F4"/><rect x="2" y="12" width="7" height="1" fill="#3C8CE4"/><rect x="9" y="12" width="8" height="1" fill="#FCC10E"/><rect x="0" y="13" width="8" height="1" fill="#3C8CE4"/><rect x="9" y="13" width="8" height="1" fill="#FCC10E"/><rect x="0" y="14" width="8" height="1" fill="#3C8CE4"/><rect x="9" y="14" width="1" height="1" fill="#F0A800"/><rect x="10" y="14" width="6" height="1" fill="#FCC10E"/><rect x="0" y="15" width="3" height="1" fill="#3C8CE4"/><rect x="4" y="15" width="3" height="1" fill="#3C8CE4"/><rect x="8" y="15" width="8" height="1" fill="#FCC10E"/><rect x="8" y="16" width="8" height="1" fill="#FCC10E"/><rect x="9" y="17" width="6" height="1" fill="#FCC10E"/></svg><div style="position:absolute;left:2px;top:67px;width:798px;height:1px;background:#808080"></div><div style="position:absolute;left:2px;top:68px;width:798px;height:1px;background:#fff"></div><svg style="position:absolute;left:5px;top:49px" width="15" height="15" viewBox="0 0 15 15" shape-rendering="crispEdges"><rect x="5" y="0" width="5" height="1" fill="#2A9A20"/><rect x="3" y="1" width="2" height="1" fill="#2A9A20"/><rect x="5" y="1" width="5" height="1" fill="#80D870"/><rect x="10" y="1" width="2" height="1" fill="#2A9A20"/><rect x="2" y="2" width="1" height="1" fill="#2A9A20"/><rect x="3" y="2" width="3" height="1" fill="#80D870"/><rect x="6" y="2" width="6" height="1" fill="#40B830"/><rect x="12" y="2" width="1" height="1" fill="#2A9A20"/><rect x="1" y="3" width="1" height="1" fill="#2A9A20"/><rect x="2" y="3" width="2" height="1" fill="#80D870"/><rect x="4" y="3" width="3" height="1" fill="#40B830"/><rect x="7" y="3" width="1" height="1" fill="#FFFFFF"/><rect x="8" y="3" width="5" height="1" fill="#40B830"/><rect x="13" y="3" width="1" height="1" fill="#2A9A20"/><rect x="1" y="4" width="1" height="1" fill="#2A9A20"/><rect x="2" y="4" width="1" height="1" fill="#80D870"/><rect x="3" y="4" width="3" height="1" fill="#40B830"/><rect x="6" y="4" width="2" height="1" fill="#FFFFFF"/><rect x="8" y="4" width="5" height="1" fill="#40B830"/><rect x="13" y="4" width="1" height="1" fill="#2A9A20"/><rect x="0" y="5" width="1" height="1" fill="#2A9A20"/><rect x="1" y="5" width="1" height="1" fill="#80D870"/><rect x="2" y="5" width="3" height="1" fill="#40B830"/><rect x="5" y="5" width="3" height="1" fill="#FFFFFF"/><rect x="8" y="5" width="6" height="1" fill="#40B830"/><rect x="14" y="5" width="1" height="1" fill="#108010"/><rect x="0" y="6" width="1" height="1" fill="#2A9A20"/><rect x="1" y="6" width="3" height="1" fill="#40B830"/><rect x="4" y="6" width="9" height="1" fill="#FFFFFF"/><rect x="13" y="6" width="1" height="1" fill="#40B830"/><rect x="14" y="6" width="1" height="1" fill="#108010"/><rect x="0" y="7" width="1" height="1" fill="#2A9A20"/><rect x="1" y="7" width="2" height="1" fill="#40B830"/><rect x="3" y="7" width="10" height="1" fill="#FFFFFF"/><rect x="13" y="7" width="1" height="1" fill="#40B830"/><rect x="14" y="7" width="1" height="1" fill="#108010"/><rect x="0" y="8" width="1" height="1" fill="#2A9A20"/><rect x="1" y="8" width="3" height="1" fill="#40B830"/><rect x="4" y="8" width="9" height="1" fill="#FFFFFF"/><rect x="13" y="8" width="1" height="1" fill="#40B830"/><rect x="14" y="8" width="1" height="1" fill="#108010"/><rect x="0" y="9" width="1" height="1" fill="#2A9A20"/><rect x="1" y="9" width="4" height="1" fill="#40B830"/><rect x="5" y="9" width="3" height="1" fill="#FFFFFF"/><rect x="8" y="9" width="6" height="1" fill="#40B830"/><rect x="14" y="9" width="1" height="1" fill="#108010"/><rect x="1" y="10" width="1" height="1" fill="#2A9A20"/><rect x="2" y="10" width="4" height="1" fill="#40B830"/><rect x="6" y="10" width="2" height="1" fill="#FFFFFF"/><rect x="8" y="10" width="5" height="1" fill="#40B830"/><rect x="13" y="10" width="1" height="1" fill="#108010"/><rect x="1" y="11" width="1" height="1" fill="#2A9A20"/><rect x="2" y="11" width="5" height="1" fill="#40B830"/><rect x="7" y="11" width="1" height="1" fill="#FFFFFF"/><rect x="8" y="11" width="5" height="1" fill="#40B830"/><rect x="13" y="11" width="1" height="1" fill="#108010"/><rect x="2" y="12" width="1" height="1" fill="#2A9A20"/><rect x="3" y="12" width="9" height="1" fill="#40B830"/><rect x="12" y="12" width="1" height="1" fill="#108010"/><rect x="3" y="13" width="2" height="1" fill="#108010"/><rect x="5" y="13" width="5" height="1" fill="#40B830"/><rect x="10" y="13" width="2" height="1" fill="#108010"/><rect x="5" y="14" width="5" height="1" fill="#108010"/></svg><div class="t" style="left:24px;top:48px;line-height:17px;">Back</div><svg style="position:absolute;left:55px;top:55px" width="5" height="3" viewBox="0 0 5 3" shape-rendering="crispEdges"><path d="M0 0h5v1H0zM1 1h3v1H1zM2 2h1v1H2z" fill="#000"/></svg><svg style="position:absolute;left:69px;top:49px" width="15" height="15" viewBox="0 0 15 15" shape-rendering="crispEdges"><rect x="5" y="0" width="5" height="1" fill="#989898"/><rect x="3" y="1" width="2" height="1" fill="#989898"/><rect x="5" y="1" width="5" height="1" fill="#D8D8D8"/><rect x="10" y="1" width="2" height="1" fill="#989898"/><rect x="2" y="2" width="1" height="1" fill="#989898"/><rect x="3" y="2" width="6" height="1" fill="#B4B4B4"/><rect x="9" y="2" width="3" height="1" fill="#D8D8D8"/><rect x="12" y="2" width="1" height="1" fill="#989898"/><rect x="1" y="3" width="1" height="1" fill="#989898"/><rect x="2" y="3" width="5" height="1" fill="#B4B4B4"/><rect x="7" y="3" width="1" height="1" fill="#FFFFFF"/><rect x="8" y="3" width="3" height="1" fill="#B4B4B4"/><rect x="11" y="3" width="2" height="1" fill="#D8D8D8"/><rect x="13" y="3" width="1" height="1" fill="#989898"/><rect x="1" y="4" width="1" height="1" fill="#989898"/><rect x="2" y="4" width="5" height="1" fill="#B4B4B4"/><rect x="7" y="4" width="2" height="1" fill="#FFFFFF"/><rect x="9" y="4" width="3" height="1" fill="#B4B4B4"/><rect x="12" y="4" width="1" height="1" fill="#D8D8D8"/><rect x="13" y="4" width="1" height="1" fill="#989898"/><rect x="0" y="5" width="1" height="1" fill="#808080"/><rect x="1" y="5" width="6" height="1" fill="#B4B4B4"/><rect x="7" y="5" width="3" height="1" fill="#FFFFFF"/><rect x="10" y="5" width="3" height="1" fill="#B4B4B4"/><rect x="13" y="5" width="1" height="1" fill="#D8D8D8"/><rect x="14" y="5" width="1" height="1" fill="#989898"/><rect x="0" y="6" width="1" height="1" fill="#808080"/><rect x="1" y="6" width="1" height="1" fill="#B4B4B4"/><rect x="2" y="6" width="9" height="1" fill="#FFFFFF"/><rect x="11" y="6" width="3" height="1" fill="#B4B4B4"/><rect x="14" y="6" width="1" height="1" fill="#989898"/><rect x="0" y="7" width="1" height="1" fill="#808080"/><rect x="1" y="7" width="1" height="1" fill="#B4B4B4"/><rect x="2" y="7" width="10" height="1" fill="#FFFFFF"/><rect x="12" y="7" width="2" height="1" fill="#B4B4B4"/><rect x="14" y="7" width="1" height="1" fill="#989898"/><rect x="0" y="8" width="1" height="1" fill="#808080"/><rect x="1" y="8" width="1" height="1" fill="#B4B4B4"/><rect x="2" y="8" width="9" height="1" fill="#FFFFFF"/><rect x="11" y="8" width="3" height="1" fill="#B4B4B4"/><rect x="14" y="8" width="1" height="1" fill="#989898"/><rect x="0" y="9" width="1" height="1" fill="#808080"/><rect x="1" y="9" width="6" height="1" fill="#B4B4B4"/><rect x="7" y="9" width="3" height="1" fill="#FFFFFF"/><rect x="10" y="9" width="4" height="1" fill="#B4B4B4"/><rect x="14" y="9" width="1" height="1" fill="#989898"/><rect x="1" y="10" width="1" height="1" fill="#808080"/><rect x="2" y="10" width="5" height="1" fill="#B4B4B4"/><rect x="7" y="10" width="2" height="1" fill="#FFFFFF"/><rect x="9" y="10" width="4" height="1" fill="#B4B4B4"/><rect x="13" y="10" width="1" height="1" fill="#989898"/><rect x="1" y="11" width="1" height="1" fill="#808080"/><rect x="2" y="11" width="5" height="1" fill="#B4B4B4"/><rect x="7" y="11" width="1" height="1" fill="#FFFFFF"/><rect x="8" y="11" width="5" height="1" fill="#B4B4B4"/><rect x="13" y="11" width="1" height="1" fill="#989898"/><rect x="2" y="12" width="1" height="1" fill="#808080"/><rect x="3" y="12" width="9" height="1" fill="#B4B4B4"/><rect x="12" y="12" width="1" height="1" fill="#989898"/><rect x="3" y="13" width="2" height="1" fill="#808080"/><rect x="5" y="13" width="5" height="1" fill="#B4B4B4"/><rect x="10" y="13" width="2" height="1" fill="#808080"/><rect x="5" y="14" width="5" height="1" fill="#808080"/></svg><svg style="position:absolute;left:93px;top:55px" width="5" height="3" viewBox="0 0 5 3" shape-rendering="crispEdges"><path d="M0 0h5v1H0zM1 1h3v1H1zM2 2h1v1H2z" fill="#A0A0A0"/></svg><svg style="position:absolute;left:107px;top:48px" width="14" height="16" viewBox="0 0 14 16" shape-rendering="crispEdges"><rect x="7" y="0" width="2" height="1" fill="#20A030"/><rect x="6" y="1" width="4" height="1" fill="#20A030"/><rect x="5" y="2" width="2" height="1" fill="#20A030"/><rect x="7" y="2" width="1" height="1" fill="#70D060"/><rect x="8" y="2" width="3" height="1" fill="#20A030"/><rect x="4" y="3" width="2" height="1" fill="#20A030"/><rect x="6" y="3" width="2" height="1" fill="#70D060"/><rect x="8" y="3" width="4" height="1" fill="#20A030"/><rect x="2" y="4" width="2" height="1" fill="#D8A020"/><rect x="4" y="4" width="3" height="1" fill="#20A030"/><rect x="7" y="4" width="1" height="1" fill="#70D060"/><rect x="8" y="4" width="5" height="1" fill="#20A030"/><rect x="1" y="5" width="1" height="1" fill="#D8A020"/><rect x="2" y="5" width="2" height="1" fill="#FFF8D0"/><rect x="4" y="5" width="1" height="1" fill="#D8A020"/><rect x="5" y="5" width="7" height="1" fill="#20A030"/><rect x="0" y="6" width="1" height="1" fill="#D8A020"/><rect x="1" y="6" width="1" height="1" fill="#FFF8D0"/><rect x="2" y="6" width="3" height="1" fill="#F8E888"/><rect x="5" y="6" width="1" height="1" fill="#D8A020"/><rect x="6" y="6" width="5" height="1" fill="#20A030"/><rect x="0" y="7" width="1" height="1" fill="#D8A020"/><rect x="1" y="7" width="1" height="1" fill="#FFF8D0"/><rect x="2" y="7" width="4" height="1" fill="#F8E888"/><rect x="6" y="7" width="4" height="1" fill="#20A030"/><rect x="10" y="7" width="1" height="1" fill="#D8A020"/><rect x="0" y="8" width="1" height="1" fill="#D8A020"/><rect x="1" y="8" width="1" height="1" fill="#FFF8D0"/><rect x="2" y="8" width="4" height="1" fill="#F8E888"/><rect x="6" y="8" width="3" height="1" fill="#20A030"/><rect x="9" y="8" width="2" height="1" fill="#F8E888"/><rect x="11" y="8" width="1" height="1" fill="#D8A020"/><rect x="0" y="9" width="1" height="1" fill="#D8A020"/><rect x="1" y="9" width="1" height="1" fill="#FFF8D0"/><rect x="2" y="9" width="1" height="1" fill="#F8E888"/><rect x="3" y="9" width="3" height="1" fill="#D8A020"/><rect x="6" y="9" width="3" height="1" fill="#20A030"/><rect x="9" y="9" width="5" height="1" fill="#D8A020"/><rect x="0" y="10" width="1" height="1" fill="#D8A020"/><rect x="1" y="10" width="1" height="1" fill="#FFF8D0"/><rect x="2" y="10" width="1" height="1" fill="#D8A020"/><rect x="3" y="10" width="3" height="1" fill="#F4D870"/><rect x="6" y="10" width="2" height="1" fill="#20A030"/><rect x="8" y="10" width="5" height="1" fill="#F4D870"/><rect x="13" y="10" width="1" height="1" fill="#D8A020"/><rect x="0" y="11" width="1" height="1" fill="#D8A020"/><rect x="1" y="11" width="1" height="1" fill="#FFF8D0"/><rect x="2" y="11" width="1" height="1" fill="#D8A020"/><rect x="3" y="11" width="3" height="1" fill="#F4D870"/><rect x="6" y="11" width="1" height="1" fill="#20A030"/><rect x="7" y="11" width="5" height="1" fill="#F4D870"/><rect x="12" y="11" width="1" height="1" fill="#D8A020"/><rect x="0" y="12" width="1" height="1" fill="#D8A020"/><rect x="1" y="12" width="1" height="1" fill="#F4D870"/><rect x="2" y="12" width="1" height="1" fill="#D8A020"/><rect x="3" y="12" width="9" height="1" fill="#F4D870"/><rect x="12" y="12" width="1" height="1" fill="#D8A020"/><rect x="0" y="13" width="1" height="1" fill="#D8A020"/><rect x="1" y="13" width="10" height="1" fill="#F4D870"/><rect x="11" y="13" width="1" height="1" fill="#D8A020"/><rect x="0" y="14" width="12" height="1" fill="#D8A020"/></svg><div style="position:absolute;left:128px;top:47px;width:1px;height:18px;background:#808080"></div><div style="position:absolute;left:129px;top:47px;width:1px;height:18px;background:#fff"></div><svg style="position:absolute;left:135px;top:48px" width="16" height="15" viewBox="0 0 16 15" shape-rendering="crispEdges"><rect x="8" y="0" width="5" height="1" fill="#7A90D8"/><rect x="6" y="1" width="2" height="1" fill="#7A90D8"/><rect x="8" y="1" width="5" height="1" fill="#B8E0F8"/><rect x="13" y="1" width="2" height="1" fill="#7A90D8"/><rect x="6" y="2" width="1" height="1" fill="#7A90D8"/><rect x="7" y="2" width="1" height="1" fill="#B8E0F8"/><rect x="8" y="2" width="2" height="1" fill="#FFFFFF"/><rect x="10" y="2" width="4" height="1" fill="#B8E0F8"/><rect x="14" y="2" width="1" height="1" fill="#7A90D8"/><rect x="5" y="3" width="1" height="1" fill="#7A90D8"/><rect x="6" y="3" width="1" height="1" fill="#B8E0F8"/><rect x="7" y="3" width="2" height="1" fill="#FFFFFF"/><rect x="9" y="3" width="6" height="1" fill="#B8E0F8"/><rect x="15" y="3" width="1" height="1" fill="#7A90D8"/><rect x="5" y="4" width="1" height="1" fill="#7A90D8"/><rect x="6" y="4" width="1" height="1" fill="#B8E0F8"/><rect x="7" y="4" width="1" height="1" fill="#FFFFFF"/><rect x="8" y="4" width="7" height="1" fill="#B8E0F8"/><rect x="15" y="4" width="1" height="1" fill="#7A90D8"/><rect x="5" y="5" width="1" height="1" fill="#7A90D8"/><rect x="6" y="5" width="9" height="1" fill="#B8E0F8"/><rect x="15" y="5" width="1" height="1" fill="#7A90D8"/><rect x="5" y="6" width="1" height="1" fill="#7A90D8"/><rect x="6" y="6" width="9" height="1" fill="#B8E0F8"/><rect x="15" y="6" width="1" height="1" fill="#7A90D8"/><rect x="5" y="7" width="1" height="1" fill="#7A90D8"/><rect x="6" y="7" width="9" height="1" fill="#B8E0F8"/><rect x="15" y="7" width="1" height="1" fill="#7A90D8"/><rect x="6" y="8" width="1" height="1" fill="#7A90D8"/><rect x="7" y="8" width="7" height="1" fill="#B8E0F8"/><rect x="14" y="8" width="1" height="1" fill="#7A90D8"/><rect x="6" y="9" width="2" height="1" fill="#7A90D8"/><rect x="8" y="9" width="5" height="1" fill="#B8E0F8"/><rect x="13" y="9" width="2" height="1" fill="#7A90D8"/><rect x="4" y="10" width="2" height="1" fill="#E8A040"/><rect x="8" y="10" width="5" height="1" fill="#7A90D8"/><rect x="3" y="11" width="3" height="1" fill="#E8A040"/><rect x="2" y="12" width="3" height="1" fill="#E8A040"/><rect x="1" y="13" width="3" height="1" fill="#E8A040"/><rect x="1" y="14" width="2" height="1" fill="#E8A040"/></svg><div class="t" style="left:155px;top:48px;line-height:17px;">Search</div><div style="position:absolute;left:196px;top:45px;width:66px;height:21px;background-color:#fff;background-image:linear-gradient(45deg,#D4D0C8 25%,transparent 25%,transparent 75%,#D4D0C8 75%),linear-gradient(45deg,#D4D0C8 25%,transparent 25%,transparent 75%,#D4D0C8 75%);background-size:2px 2px;background-position:0 0,1px 1px;box-shadow:inset 1px 1px #808080, inset -1px -1px #fff;"></div><svg style="position:absolute;left:200px;top:50px" width="16" height="16"><use href="#folderopen"/></svg><div class="t" style="left:220px;top:49px;line-height:17px;">Folders</div><div style="position:absolute;left:264px;top:47px;width:1px;height:18px;background:#808080"></div><div style="position:absolute;left:265px;top:47px;width:1px;height:18px;background:#fff"></div><svg style="position:absolute;left:272px;top:48px" width="16" height="15" viewBox="0 0 16 15" shape-rendering="crispEdges"><rect x="2" y="1" width="7" height="1" fill="#6A80C8"/><rect x="1" y="2" width="1" height="1" fill="#E0B030"/><rect x="2" y="2" width="1" height="1" fill="#6A80C8"/><rect x="3" y="2" width="5" height="1" fill="#FFFFFF"/><rect x="8" y="2" width="2" height="1" fill="#6A80C8"/><rect x="11" y="2" width="2" height="1" fill="#E0B030"/><rect x="0" y="3" width="1" height="1" fill="#E0B030"/><rect x="1" y="3" width="1" height="1" fill="#FFF8D0"/><rect x="2" y="3" width="1" height="1" fill="#6A80C8"/><rect x="3" y="3" width="6" height="1" fill="#FFFFFF"/><rect x="9" y="3" width="1" height="1" fill="#6A80C8"/><rect x="10" y="3" width="1" height="1" fill="#E0B030"/><rect x="11" y="3" width="2" height="1" fill="#FFF8D0"/><rect x="13" y="3" width="1" height="1" fill="#E0B030"/><rect x="0" y="4" width="1" height="1" fill="#E0B030"/><rect x="1" y="4" width="1" height="1" fill="#FFF8D0"/><rect x="2" y="4" width="1" height="1" fill="#6A80C8"/><rect x="3" y="4" width="6" height="1" fill="#FFFFFF"/><rect x="9" y="4" width="1" height="1" fill="#6A80C8"/><rect x="10" y="4" width="3" height="1" fill="#F8E070"/><rect x="13" y="4" width="1" height="1" fill="#FFF8D0"/><rect x="14" y="4" width="1" height="1" fill="#E0B030"/><rect x="0" y="5" width="1" height="1" fill="#E0B030"/><rect x="1" y="5" width="1" height="1" fill="#FFF8D0"/><rect x="2" y="5" width="1" height="1" fill="#6A80C8"/><rect x="3" y="5" width="6" height="1" fill="#FFFFFF"/><rect x="9" y="5" width="1" height="1" fill="#6A80C8"/><rect x="10" y="5" width="6" height="1" fill="#E0B030"/><rect x="0" y="6" width="1" height="1" fill="#E0B030"/><rect x="1" y="6" width="1" height="1" fill="#FFF8D0"/><rect x="2" y="6" width="1" height="1" fill="#6A80C8"/><rect x="3" y="6" width="6" height="1" fill="#FFFFFF"/><rect x="9" y="6" width="1" height="1" fill="#6A80C8"/><rect x="10" y="6" width="5" height="1" fill="#F8E070"/><rect x="15" y="6" width="1" height="1" fill="#E0B030"/><rect x="0" y="7" width="1" height="1" fill="#E0B030"/><rect x="1" y="7" width="1" height="1" fill="#FFF8D0"/><rect x="2" y="7" width="1" height="1" fill="#6A80C8"/><rect x="3" y="7" width="4" height="1" fill="#FFFFFF"/><rect x="7" y="7" width="2" height="1" fill="#20A030"/><rect x="9" y="7" width="1" height="1" fill="#6A80C8"/><rect x="10" y="7" width="4" height="1" fill="#F8E070"/><rect x="14" y="7" width="1" height="1" fill="#E0B030"/><rect x="0" y="8" width="1" height="1" fill="#E0B030"/><rect x="1" y="8" width="1" height="1" fill="#FFF8D0"/><rect x="2" y="8" width="5" height="1" fill="#6A80C8"/><rect x="7" y="8" width="3" height="1" fill="#20A030"/><rect x="10" y="8" width="4" height="1" fill="#F8E070"/><rect x="14" y="8" width="1" height="1" fill="#E0B030"/><rect x="0" y="9" width="1" height="1" fill="#E0B030"/><rect x="1" y="9" width="1" height="1" fill="#FFF8D0"/><rect x="2" y="9" width="1" height="1" fill="#F8E070"/><rect x="3" y="9" width="8" height="1" fill="#20A030"/><rect x="11" y="9" width="2" height="1" fill="#F8E070"/><rect x="13" y="9" width="1" height="1" fill="#E0B030"/><rect x="0" y="10" width="1" height="1" fill="#E0B030"/><rect x="1" y="10" width="1" height="1" fill="#FFF8D0"/><rect x="2" y="10" width="1" height="1" fill="#F8E070"/><rect x="3" y="10" width="9" height="1" fill="#20A030"/><rect x="12" y="10" width="1" height="1" fill="#F8E070"/><rect x="13" y="10" width="1" height="1" fill="#E0B030"/><rect x="0" y="11" width="1" height="1" fill="#E0B030"/><rect x="1" y="11" width="1" height="1" fill="#FFF8D0"/><rect x="2" y="11" width="1" height="1" fill="#F8E070"/><rect x="3" y="11" width="8" height="1" fill="#20A030"/><rect x="11" y="11" width="1" height="1" fill="#F8E070"/><rect x="12" y="11" width="1" height="1" fill="#E0B030"/><rect x="0" y="12" width="1" height="1" fill="#E0B030"/><rect x="1" y="12" width="1" height="1" fill="#FFF8D0"/><rect x="2" y="12" width="5" height="1" fill="#F8E070"/><rect x="7" y="12" width="3" height="1" fill="#20A030"/><rect x="10" y="12" width="2" height="1" fill="#F8E070"/><rect x="12" y="12" width="1" height="1" fill="#E0B030"/><rect x="0" y="13" width="1" height="1" fill="#E0B030"/><rect x="1" y="13" width="6" height="1" fill="#F8E070"/><rect x="7" y="13" width="2" height="1" fill="#20A030"/><rect x="9" y="13" width="2" height="1" fill="#F8E070"/><rect x="11" y="13" width="1" height="1" fill="#E0B030"/><rect x="0" y="14" width="12" height="1" fill="#E0B030"/></svg><svg style="position:absolute;left:297px;top:49px" width="15" height="14" viewBox="0 0 15 14" shape-rendering="crispEdges"><rect x="5" y="0" width="6" height="1" fill="#6A80C8"/><rect x="3" y="1" width="2" height="1" fill="#E0B030"/><rect x="5" y="1" width="1" height="1" fill="#6A80C8"/><rect x="6" y="1" width="4" height="1" fill="#FFFFFF"/><rect x="10" y="1" width="2" height="1" fill="#6A80C8"/><rect x="2" y="2" width="1" height="1" fill="#E0B030"/><rect x="3" y="2" width="1" height="1" fill="#FFF8D0"/><rect x="4" y="2" width="1" height="1" fill="#6A80C8"/><rect x="5" y="2" width="6" height="1" fill="#FFFFFF"/><rect x="11" y="2" width="1" height="1" fill="#6A80C8"/><rect x="12" y="2" width="1" height="1" fill="#E0B030"/><rect x="0" y="3" width="6" height="1" fill="#6A80C8"/><rect x="6" y="3" width="5" height="1" fill="#FFFFFF"/><rect x="11" y="3" width="1" height="1" fill="#6A80C8"/><rect x="12" y="3" width="1" height="1" fill="#FFF8D0"/><rect x="13" y="3" width="1" height="1" fill="#E0B030"/><rect x="0" y="4" width="1" height="1" fill="#6A80C8"/><rect x="1" y="4" width="4" height="1" fill="#FFFFFF"/><rect x="5" y="4" width="2" height="1" fill="#6A80C8"/><rect x="7" y="4" width="2" height="1" fill="#FFFFFF"/><rect x="9" y="4" width="1" height="1" fill="#20A030"/><rect x="10" y="4" width="1" height="1" fill="#FFFFFF"/><rect x="11" y="4" width="1" height="1" fill="#6A80C8"/><rect x="12" y="4" width="1" height="1" fill="#F8E070"/><rect x="13" y="4" width="1" height="1" fill="#E0B030"/><rect x="0" y="5" width="1" height="1" fill="#6A80C8"/><rect x="1" y="5" width="5" height="1" fill="#FFFFFF"/><rect x="6" y="5" width="1" height="1" fill="#6A80C8"/><rect x="7" y="5" width="1" height="1" fill="#FFFFFF"/><rect x="8" y="5" width="3" height="1" fill="#20A030"/><rect x="11" y="5" width="1" height="1" fill="#6A80C8"/><rect x="12" y="5" width="1" height="1" fill="#F8E070"/><rect x="13" y="5" width="1" height="1" fill="#E0B030"/><rect x="0" y="6" width="1" height="1" fill="#6A80C8"/><rect x="1" y="6" width="5" height="1" fill="#FFFFFF"/><rect x="6" y="6" width="1" height="1" fill="#6A80C8"/><rect x="7" y="6" width="5" height="1" fill="#20A030"/><rect x="12" y="6" width="1" height="1" fill="#F8E070"/><rect x="13" y="6" width="1" height="1" fill="#E0B030"/><rect x="0" y="7" width="1" height="1" fill="#6A80C8"/><rect x="1" y="7" width="5" height="1" fill="#FFFFFF"/><rect x="6" y="7" width="2" height="1" fill="#20A030"/><rect x="8" y="7" width="1" height="1" fill="#FFFFFF"/><rect x="9" y="7" width="3" height="1" fill="#20A030"/><rect x="12" y="7" width="1" height="1" fill="#F8E070"/><rect x="13" y="7" width="1" height="1" fill="#E0B030"/><rect x="0" y="8" width="1" height="1" fill="#6A80C8"/><rect x="1" y="8" width="4" height="1" fill="#FFFFFF"/><rect x="5" y="8" width="2" height="1" fill="#20A030"/><rect x="7" y="8" width="2" height="1" fill="#FFFFFF"/><rect x="9" y="8" width="2" height="1" fill="#20A030"/><rect x="11" y="8" width="1" height="1" fill="#F8E070"/><rect x="12" y="8" width="1" height="1" fill="#E0B030"/><rect x="0" y="9" width="1" height="1" fill="#6A80C8"/><rect x="1" y="9" width="4" height="1" fill="#FFFFFF"/><rect x="5" y="9" width="1" height="1" fill="#20A030"/><rect x="6" y="9" width="2" height="1" fill="#FFFFFF"/><rect x="8" y="9" width="1" height="1" fill="#6A80C8"/><rect x="9" y="9" width="3" height="1" fill="#F8E070"/><rect x="12" y="9" width="1" height="1" fill="#E0B030"/><rect x="0" y="10" width="1" height="1" fill="#6A80C8"/><rect x="1" y="10" width="7" height="1" fill="#FFFFFF"/><rect x="8" y="10" width="1" height="1" fill="#6A80C8"/><rect x="9" y="10" width="2" height="1" fill="#F8E070"/><rect x="11" y="10" width="1" height="1" fill="#E0B030"/><rect x="0" y="11" width="1" height="1" fill="#6A80C8"/><rect x="1" y="11" width="7" height="1" fill="#FFFFFF"/><rect x="8" y="11" width="1" height="1" fill="#6A80C8"/><rect x="9" y="11" width="1" height="1" fill="#F8E070"/><rect x="10" y="11" width="1" height="1" fill="#E0B030"/><rect x="0" y="12" width="9" height="1" fill="#6A80C8"/><rect x="9" y="12" width="2" height="1" fill="#E0B030"/><rect x="3" y="13" width="6" height="1" fill="#E0B030"/></svg><svg style="position:absolute;left:321px;top:49px" width="16" height="15" viewBox="0 0 16 15" shape-rendering="crispEdges"><rect x="0" y="0" width="2" height="1" fill="#E8341C"/><rect x="13" y="0" width="2" height="1" fill="#E8341C"/><rect x="0" y="1" width="3" height="1" fill="#E8341C"/><rect x="12" y="1" width="3" height="1" fill="#E8341C"/><rect x="1" y="2" width="3" height="1" fill="#E8341C"/><rect x="11" y="2" width="3" height="1" fill="#E8341C"/><rect x="2" y="3" width="3" height="1" fill="#E8341C"/><rect x="10" y="3" width="3" height="1" fill="#E8341C"/><rect x="3" y="4" width="3" height="1" fill="#E8341C"/><rect x="9" y="4" width="3" height="1" fill="#E8341C"/><rect x="4" y="5" width="3" height="1" fill="#E8341C"/><rect x="8" y="5" width="3" height="1" fill="#E8341C"/><rect x="5" y="6" width="5" height="1" fill="#E8341C"/><rect x="6" y="7" width="3" height="1" fill="#E8341C"/><rect x="5" y="8" width="5" height="1" fill="#E8341C"/><rect x="4" y="9" width="3" height="1" fill="#E8341C"/><rect x="8" y="9" width="3" height="1" fill="#E8341C"/><rect x="3" y="10" width="3" height="1" fill="#E8341C"/><rect x="9" y="10" width="3" height="1" fill="#E8341C"/><rect x="2" y="11" width="3" height="1" fill="#E8341C"/><rect x="10" y="11" width="3" height="1" fill="#E8341C"/><rect x="1" y="12" width="3" height="1" fill="#E8341C"/><rect x="11" y="12" width="3" height="1" fill="#E8341C"/><rect x="0" y="13" width="3" height="1" fill="#E8341C"/><rect x="12" y="13" width="3" height="1" fill="#E8341C"/><rect x="0" y="14" width="2" height="1" fill="#E8341C"/><rect x="13" y="14" width="2" height="1" fill="#E8341C"/></svg><svg style="position:absolute;left:344px;top:49px" width="16" height="15" viewBox="0 0 16 15" shape-rendering="crispEdges"><rect x="8" y="0" width="4" height="1" fill="#2A62D0"/><rect x="6" y="1" width="2" height="1" fill="#2A62D0"/><rect x="8" y="1" width="3" height="1" fill="#6AA8F0"/><rect x="11" y="1" width="3" height="1" fill="#2A62D0"/><rect x="1" y="2" width="1" height="1" fill="#2A62D0"/><rect x="5" y="2" width="2" height="1" fill="#2A62D0"/><rect x="7" y="2" width="1" height="1" fill="#6AA8F0"/><rect x="12" y="2" width="3" height="1" fill="#2A62D0"/><rect x="1" y="3" width="2" height="1" fill="#2A62D0"/><rect x="4" y="3" width="2" height="1" fill="#2A62D0"/><rect x="6" y="3" width="1" height="1" fill="#6AA8F0"/><rect x="13" y="3" width="2" height="1" fill="#2A62D0"/><rect x="1" y="4" width="1" height="1" fill="#2A62D0"/><rect x="2" y="4" width="1" height="1" fill="#6AA8F0"/><rect x="3" y="4" width="2" height="1" fill="#2A62D0"/><rect x="5" y="4" width="1" height="1" fill="#6AA8F0"/><rect x="13" y="4" width="3" height="1" fill="#2A62D0"/><rect x="1" y="5" width="1" height="1" fill="#2A62D0"/><rect x="2" y="5" width="2" height="1" fill="#6AA8F0"/><rect x="4" y="5" width="1" height="1" fill="#2A62D0"/><rect x="13" y="5" width="1" height="1" fill="#2A62D0"/><rect x="14" y="5" width="1" height="1" fill="#6AA8F0"/><rect x="15" y="5" width="1" height="1" fill="#2A62D0"/><rect x="1" y="6" width="1" height="1" fill="#2A62D0"/><rect x="2" y="6" width="3" height="1" fill="#6AA8F0"/><rect x="5" y="6" width="1" height="1" fill="#2A62D0"/><rect x="13" y="6" width="1" height="1" fill="#2A62D0"/><rect x="14" y="6" width="1" height="1" fill="#6AA8F0"/><rect x="15" y="6" width="1" height="1" fill="#2A62D0"/><rect x="1" y="7" width="6" height="1" fill="#2A62D0"/><rect x="13" y="7" width="2" height="1" fill="#2A62D0"/><rect x="13" y="8" width="2" height="1" fill="#2A62D0"/><rect x="12" y="9" width="3" height="1" fill="#2A62D0"/><rect x="11" y="10" width="1" height="1" fill="#2A62D0"/><rect x="12" y="10" width="1" height="1" fill="#6AA8F0"/><rect x="13" y="10" width="1" height="1" fill="#2A62D0"/><rect x="10" y="11" width="1" height="1" fill="#2A62D0"/><rect x="11" y="11" width="1" height="1" fill="#6AA8F0"/><rect x="12" y="11" width="1" height="1" fill="#2A62D0"/><rect x="9" y="12" width="3" height="1" fill="#2A62D0"/><rect x="8" y="13" width="3" height="1" fill="#2A62D0"/><rect x="8" y="14" width="2" height="1" fill="#2A62D0"/></svg><div style="position:absolute;left:366px;top:47px;width:1px;height:18px;background:#808080"></div><div style="position:absolute;left:367px;top:47px;width:1px;height:18px;background:#fff"></div><svg style="position:absolute;left:375px;top:49px" width="16" height="15" viewBox="0 0 16 15" shape-rendering="crispEdges"><rect x="0" y="0" width="16" height="1" fill="#3A6AD0"/><rect x="0" y="1" width="1" height="1" fill="#3A6AD0"/><rect x="1" y="1" width="14" height="1" fill="#5A8AE0"/><rect x="15" y="1" width="1" height="1" fill="#3A6AD0"/><rect x="0" y="2" width="1" height="1" fill="#3A6AD0"/><rect x="1" y="2" width="14" height="1" fill="#FFFFFF"/><rect x="15" y="2" width="1" height="1" fill="#3A6AD0"/><rect x="0" y="3" width="1" height="1" fill="#3A6AD0"/><rect x="1" y="3" width="14" height="1" fill="#FFFFFF"/><rect x="15" y="3" width="1" height="1" fill="#3A6AD0"/><rect x="0" y="4" width="1" height="1" fill="#3A6AD0"/><rect x="1" y="4" width="2" height="1" fill="#FFFFFF"/><rect x="3" y="4" width="2" height="1" fill="#8A9AC8"/><rect x="5" y="4" width="2" height="1" fill="#FFFFFF"/><rect x="7" y="4" width="2" height="1" fill="#2A6AD8"/><rect x="9" y="4" width="2" height="1" fill="#FFFFFF"/><rect x="11" y="4" width="2" height="1" fill="#10A030"/><rect x="13" y="4" width="2" height="1" fill="#FFFFFF"/><rect x="15" y="4" width="1" height="1" fill="#3A6AD0"/><rect x="0" y="5" width="1" height="1" fill="#3A6AD0"/><rect x="1" y="5" width="2" height="1" fill="#FFFFFF"/><rect x="3" y="5" width="2" height="1" fill="#8A9AC8"/><rect x="5" y="5" width="2" height="1" fill="#FFFFFF"/><rect x="7" y="5" width="2" height="1" fill="#2A6AD8"/><rect x="9" y="5" width="2" height="1" fill="#FFFFFF"/><rect x="11" y="5" width="2" height="1" fill="#10A030"/><rect x="13" y="5" width="2" height="1" fill="#FFFFFF"/><rect x="15" y="5" width="1" height="1" fill="#3A6AD0"/><rect x="0" y="6" width="1" height="1" fill="#3A6AD0"/><rect x="1" y="6" width="14" height="1" fill="#FFFFFF"/><rect x="15" y="6" width="1" height="1" fill="#3A6AD0"/><rect x="0" y="7" width="1" height="1" fill="#3A6AD0"/><rect x="1" y="7" width="14" height="1" fill="#FFFFFF"/><rect x="15" y="7" width="1" height="1" fill="#3A6AD0"/><rect x="0" y="8" width="1" height="1" fill="#3A6AD0"/><rect x="1" y="8" width="2" height="1" fill="#FFFFFF"/><rect x="3" y="8" width="2" height="1" fill="#F08030"/><rect x="5" y="8" width="2" height="1" fill="#FFFFFF"/><rect x="7" y="8" width="2" height="1" fill="#102060"/><rect x="9" y="8" width="2" height="1" fill="#FFFFFF"/><rect x="11" y="8" width="2" height="1" fill="#C89020"/><rect x="13" y="8" width="2" height="1" fill="#FFFFFF"/><rect x="15" y="8" width="1" height="1" fill="#3A6AD0"/><rect x="0" y="9" width="1" height="1" fill="#3A6AD0"/><rect x="1" y="9" width="2" height="1" fill="#FFFFFF"/><rect x="3" y="9" width="2" height="1" fill="#F08030"/><rect x="5" y="9" width="2" height="1" fill="#FFFFFF"/><rect x="7" y="9" width="2" height="1" fill="#102060"/><rect x="9" y="9" width="2" height="1" fill="#FFFFFF"/><rect x="11" y="9" width="2" height="1" fill="#C89020"/><rect x="13" y="9" width="2" height="1" fill="#FFFFFF"/><rect x="15" y="9" width="1" height="1" fill="#3A6AD0"/><rect x="0" y="10" width="1" height="1" fill="#3A6AD0"/><rect x="1" y="10" width="14" height="1" fill="#FFFFFF"/><rect x="15" y="10" width="1" height="1" fill="#3A6AD0"/><rect x="0" y="11" width="1" height="1" fill="#3A6AD0"/><rect x="1" y="11" width="14" height="1" fill="#FFFFFF"/><rect x="15" y="11" width="1" height="1" fill="#3A6AD0"/><rect x="0" y="12" width="1" height="1" fill="#3A6AD0"/><rect x="1" y="12" width="14" height="1" fill="#FFFFFF"/><rect x="15" y="12" width="1" height="1" fill="#3A6AD0"/><rect x="0" y="13" width="16" height="1" fill="#3A6AD0"/></svg><svg style="position:absolute;left:393px;top:55px" width="5" height="3" viewBox="0 0 5 3" shape-rendering="crispEdges"><path d="M0 0h5v1H0zM1 1h3v1H1zM2 2h1v1H2z" fill="#000"/></svg><div class="t" style="left:6px;top:72px;line-height:17px;">A<u>d</u>dress</div><div style="position:absolute;left:49px;top:69px;width:691px;height:23px;background:#fff;box-shadow:inset 1px 1px #808080, inset -1px -1px #fff, inset 2px 2px #404040, inset -2px -2px #D4D0C8;"></div><svg style="position:absolute;left:52px;top:72px" width="16" height="16"><use href="#folder"/></svg><div class="t" style="left:72px;top:72px;line-height:17px;">C:\php\dlls</div><div style="position:absolute;left:723px;top:71px;width:16px;height:18px;background:#D4D0C8;box-shadow:inset -1px -1px #404040, inset 1px 1px #D4D0C8, inset -2px -2px #808080, inset 2px 2px #fff;"></div><svg style="position:absolute;left:727px;top:78px" width="7" height="4" viewBox="0 0 7 4" shape-rendering="crispEdges"><path d="M0 0h7v1H0zM1 1h5v1H1zM2 2h3v1H2zM3 3h1v1H3z" fill="#000"/></svg><svg style="position:absolute;left:746px;top:70px" width="20" height="20" viewBox="0 0 20 20" shape-rendering="crispEdges"><rect x="0" y="0" width="20" height="20" rx="2" fill="#fff" shape-rendering="auto"/><rect x="1" y="1" width="18" height="18" rx="1.5" fill="#1E9A2A" shape-rendering="auto"/><rect x="2" y="2" width="16" height="8" fill="#34B040" opacity="0.6"/><rect x="2" y="2" width="2" height="2" fill="#7AC880"/><path d="M4 10h10M9.5 4.5L15 10l-5.5 5.5" fill="none" stroke="#fff" stroke-width="2" shape-rendering="auto"/></svg><div class="t" style="left:769px;top:72px;line-height:17px;letter-spacing:-0.3px">Go</div><div style="position:absolute;left:1px;top:91px;width:797px;height:1px;background:#808080"></div><div style="position:absolute;left:0px;top:92px;width:798px;height:1px;background:#fff"></div><div style="position:absolute;left:0px;top:93px;width:199px;height:1px;background:#808080"></div><div style="position:absolute;left:1px;top:94px;width:197px;height:1px;background:#fff"></div><div style="position:absolute;left:0px;top:93px;width:1px;height:457px;background:#808080"></div><div style="position:absolute;left:1px;top:94px;width:1px;height:456px;background:#fff"></div><div style="position:absolute;left:198px;top:93px;width:1px;height:457px;background:#808080"></div><div style="position:absolute;left:199px;top:93px;width:1px;height:457px;background:#fff"></div><div class="t" style="left:7px;top:96px;line-height:18px;">Folders</div><svg style="position:absolute;left:183px;top:100px" width="8" height="7" viewBox="0 0 8 7" shape-rendering="crispEdges"><rect x="0" y="0" width="2" height="1" fill="#000"/><rect x="6" y="0" width="2" height="1" fill="#000"/><rect x="1" y="1" width="2" height="1" fill="#000"/><rect x="5" y="1" width="2" height="1" fill="#000"/><rect x="2" y="2" width="4" height="1" fill="#000"/><rect x="3" y="3" width="2" height="1" fill="#000"/><rect x="2" y="4" width="4" height="1" fill="#000"/><rect x="1" y="5" width="2" height="1" fill="#000"/><rect x="5" y="5" width="2" height="1" fill="#000"/><rect x="0" y="6" width="2" height="1" fill="#000"/><rect x="6" y="6" width="2" height="1" fill="#000"/></svg><div style="position:absolute;left:2px;top:115px;width:196px;height:1px;background:#808080"></div><div style="position:absolute;left:2px;top:116px;width:180px;height:418px;background:#fff"></div><div style="position:absolute;left:2px;top:116px;width:180px;height:418px;overflow:hidden"><svg style="position:absolute;left:3px;top:1px" width="16" height="16"><use href="#desktop"/></svg><div class="t" style="left:23px;top:2px;line-height:17px;white-space:nowrap">Desktop</div><svg style="position:absolute;left:22px;top:18px" width="16" height="16"><use href="#mydocs"/></svg><div style="position:absolute;left:7px;top:22px;width:9px;height:9px;box-sizing:border-box;border:1px solid #808080;background:#fff"></div><div style="position:absolute;left:9px;top:26px;width:5px;height:1px;background:#000"></div><div style="position:absolute;left:11px;top:24px;width:1px;height:5px;background:#000"></div><div class="t" style="left:42px;top:19px;line-height:17px;white-space:nowrap">My Documents</div><svg style="position:absolute;left:22px;top:35px" width="16" height="16"><use href="#mycomp"/></svg><div style="position:absolute;left:7px;top:39px;width:9px;height:9px;box-sizing:border-box;border:1px solid #808080;background:#fff"></div><div style="position:absolute;left:9px;top:43px;width:5px;height:1px;background:#000"></div><div class="t" style="left:42px;top:36px;line-height:17px;white-space:nowrap">My Computer</div><svg style="position:absolute;left:41px;top:52px" width="16" height="16"><use href="#floppy"/></svg><div style="position:absolute;left:26px;top:56px;width:9px;height:9px;box-sizing:border-box;border:1px solid #808080;background:#fff"></div><div style="position:absolute;left:28px;top:60px;width:5px;height:1px;background:#000"></div><div style="position:absolute;left:30px;top:58px;width:1px;height:5px;background:#000"></div><div class="t" style="left:61px;top:53px;line-height:17px;white-space:nowrap">3½ Floppy (A:)</div><svg style="position:absolute;left:41px;top:69px" width="16" height="16"><use href="#disk"/></svg><div style="position:absolute;left:26px;top:73px;width:9px;height:9px;box-sizing:border-box;border:1px solid #808080;background:#fff"></div><div style="position:absolute;left:28px;top:77px;width:5px;height:1px;background:#000"></div><div class="t" style="left:61px;top:70px;line-height:17px;white-space:nowrap">Local Disk (C:)</div><svg style="position:absolute;left:60px;top:86px" width="16" height="16"><use href="#folder"/></svg><div style="position:absolute;left:45px;top:90px;width:9px;height:9px;box-sizing:border-box;border:1px solid #808080;background:#fff"></div><div style="position:absolute;left:47px;top:94px;width:5px;height:1px;background:#000"></div><div style="position:absolute;left:49px;top:92px;width:1px;height:5px;background:#000"></div><div class="t" style="left:80px;top:87px;line-height:17px;white-space:nowrap">Apache2</div><svg style="position:absolute;left:60px;top:103px" width="16" height="16"><use href="#folder"/></svg><div class="t" style="left:80px;top:104px;line-height:17px;white-space:nowrap">bin</div><svg style="position:absolute;left:60px;top:120px" width="16" height="16"><use href="#folder"/></svg><div style="position:absolute;left:45px;top:124px;width:9px;height:9px;box-sizing:border-box;border:1px solid #808080;background:#fff"></div><div style="position:absolute;left:47px;top:128px;width:5px;height:1px;background:#000"></div><div style="position:absolute;left:49px;top:126px;width:1px;height:5px;background:#000"></div><div class="t" style="left:80px;top:121px;line-height:17px;white-space:nowrap">Documents and Settings</div><svg style="position:absolute;left:60px;top:137px" width="16" height="16"><use href="#folder"/></svg><div style="position:absolute;left:45px;top:141px;width:9px;height:9px;box-sizing:border-box;border:1px solid #808080;background:#fff"></div><div style="position:absolute;left:47px;top:145px;width:5px;height:1px;background:#000"></div><div style="position:absolute;left:49px;top:143px;width:1px;height:5px;background:#000"></div><div class="t" style="left:80px;top:138px;line-height:17px;white-space:nowrap">Inetpub</div><svg style="position:absolute;left:60px;top:154px" width="16" height="16"><use href="#folder"/></svg><div style="position:absolute;left:45px;top:158px;width:9px;height:9px;box-sizing:border-box;border:1px solid #808080;background:#fff"></div><div style="position:absolute;left:47px;top:162px;width:5px;height:1px;background:#000"></div><div style="position:absolute;left:49px;top:160px;width:1px;height:5px;background:#000"></div><div class="t" style="left:80px;top:155px;line-height:17px;white-space:nowrap">mysql</div><svg style="position:absolute;left:60px;top:171px" width="16" height="16"><use href="#folder"/></svg><div style="position:absolute;left:45px;top:175px;width:9px;height:9px;box-sizing:border-box;border:1px solid #808080;background:#fff"></div><div style="position:absolute;left:47px;top:179px;width:5px;height:1px;background:#000"></div><div class="t" style="left:80px;top:172px;line-height:17px;white-space:nowrap">php</div><svg style="position:absolute;left:79px;top:188px" width="16" height="16"><use href="#folder"/></svg><div class="t" style="left:99px;top:189px;line-height:17px;white-space:nowrap">cli</div><svg style="position:absolute;left:79px;top:205px" width="16" height="16"><use href="#folderopen"/></svg><div style="position:absolute;left:98px;top:205px;width:22px;height:17px;background:#D4D0C8"></div><div class="t" style="left:99px;top:206px;line-height:17px;white-space:nowrap">dlls</div><svg style="position:absolute;left:79px;top:222px" width="16" height="16"><use href="#folder"/></svg><div class="t" style="left:99px;top:223px;line-height:17px;white-space:nowrap">extensions</div><svg style="position:absolute;left:79px;top:239px" width="16" height="16"><use href="#folder"/></svg><div class="t" style="left:99px;top:240px;line-height:17px;white-space:nowrap">mibs</div><svg style="position:absolute;left:79px;top:256px" width="16" height="16"><use href="#folder"/></svg><div class="t" style="left:99px;top:257px;line-height:17px;white-space:nowrap">openssl</div><svg style="position:absolute;left:79px;top:273px" width="16" height="16"><use href="#folder"/></svg><div class="t" style="left:99px;top:274px;line-height:17px;white-space:nowrap">pdf-related</div><svg style="position:absolute;left:79px;top:290px" width="16" height="16"><use href="#folder"/></svg><div style="position:absolute;left:64px;top:294px;width:9px;height:9px;box-sizing:border-box;border:1px solid #808080;background:#fff"></div><div style="position:absolute;left:66px;top:298px;width:5px;height:1px;background:#000"></div><div style="position:absolute;left:68px;top:296px;width:1px;height:5px;background:#000"></div><div class="t" style="left:99px;top:291px;line-height:17px;white-space:nowrap">PEAR</div><svg style="position:absolute;left:79px;top:307px" width="16" height="16"><use href="#folder"/></svg><div class="t" style="left:99px;top:308px;line-height:17px;white-space:nowrap">sapi</div><svg style="position:absolute;left:60px;top:324px" width="16" height="16"><use href="#folder"/></svg><div style="position:absolute;left:45px;top:328px;width:9px;height:9px;box-sizing:border-box;border:1px solid #808080;background:#fff"></div><div style="position:absolute;left:47px;top:332px;width:5px;height:1px;background:#000"></div><div style="position:absolute;left:49px;top:330px;width:1px;height:5px;background:#000"></div><div class="t" style="left:80px;top:325px;line-height:17px;white-space:nowrap">Program Files</div><svg style="position:absolute;left:60px;top:341px" width="16" height="16"><use href="#folder"/></svg><div style="position:absolute;left:45px;top:345px;width:9px;height:9px;box-sizing:border-box;border:1px solid #808080;background:#fff"></div><div style="position:absolute;left:47px;top:349px;width:5px;height:1px;background:#000"></div><div style="position:absolute;left:49px;top:347px;width:1px;height:5px;background:#000"></div><div class="t" style="left:80px;top:342px;line-height:17px;white-space:nowrap">public</div><svg style="position:absolute;left:60px;top:358px" width="16" height="16"><use href="#folder"/></svg><div style="position:absolute;left:45px;top:362px;width:9px;height:9px;box-sizing:border-box;border:1px solid #808080;background:#fff"></div><div style="position:absolute;left:47px;top:366px;width:5px;height:1px;background:#000"></div><div style="position:absolute;left:49px;top:364px;width:1px;height:5px;background:#000"></div><div class="t" style="left:80px;top:359px;line-height:17px;white-space:nowrap">win2k3.cd</div><svg style="position:absolute;left:60px;top:375px" width="16" height="16"><use href="#folder"/></svg><div style="position:absolute;left:45px;top:379px;width:9px;height:9px;box-sizing:border-box;border:1px solid #808080;background:#fff"></div><div style="position:absolute;left:47px;top:383px;width:5px;height:1px;background:#000"></div><div style="position:absolute;left:49px;top:381px;width:1px;height:5px;background:#000"></div><div class="t" style="left:80px;top:376px;line-height:17px;white-space:nowrap">WINDOWS</div><svg style="position:absolute;left:60px;top:392px" width="16" height="16"><use href="#folder"/></svg><div style="position:absolute;left:45px;top:396px;width:9px;height:9px;box-sizing:border-box;border:1px solid #808080;background:#fff"></div><div style="position:absolute;left:47px;top:400px;width:5px;height:1px;background:#000"></div><div style="position:absolute;left:49px;top:398px;width:1px;height:5px;background:#000"></div><div class="t" style="left:80px;top:393px;line-height:17px;white-space:nowrap">wmpub</div><svg style="position:absolute;left:60px;top:409px" width="16" height="16"><use href="#folder"/></svg><div style="position:absolute;left:45px;top:413px;width:9px;height:9px;box-sizing:border-box;border:1px solid #808080;background:#fff"></div><div style="position:absolute;left:47px;top:417px;width:5px;height:1px;background:#000"></div><div style="position:absolute;left:49px;top:415px;width:1px;height:5px;background:#000"></div><div class="t" style="left:80px;top:410px;line-height:17px;white-space:nowrap">WUTemp</div></div><div style="position:absolute;left:182px;top:116px;width:16px;height:418px;background-color:#fff;background-image:linear-gradient(45deg,#D4D0C8 25%,transparent 25%,transparent 75%,#D4D0C8 75%),linear-gradient(45deg,#D4D0C8 25%,transparent 25%,transparent 75%,#D4D0C8 75%);background-size:2px 2px;background-position:0 0,1px 1px;"></div><div style="position:absolute;left:182px;top:117px;width:16px;height:16px;background:#D4D0C8;box-shadow:inset -1px -1px #404040, inset 1px 1px #D4D0C8, inset -2px -2px #808080, inset 2px 2px #fff;"></div><svg style="position:absolute;left:186px;top:122px" width="7" height="4" viewBox="0 0 7 4" shape-rendering="crispEdges"><path d="M3 0h1v1H3zM2 1h3v1H2zM1 2h5v1H1zM0 3h7v1H0z" fill="#000"/></svg><div style="position:absolute;left:182px;top:133px;width:16px;height:318px;background:#D4D0C8;box-shadow:inset -1px -1px #404040, inset 1px 1px #D4D0C8, inset -2px -2px #808080, inset 2px 2px #fff;"></div><div style="position:absolute;left:182px;top:518px;width:16px;height:16px;background:#D4D0C8;box-shadow:inset -1px -1px #404040, inset 1px 1px #D4D0C8, inset -2px -2px #808080, inset 2px 2px #fff;"></div><svg style="position:absolute;left:186px;top:523px" width="7" height="4" viewBox="0 0 7 4" shape-rendering="crispEdges"><path d="M0 0h7v1H0zM1 1h5v1H1zM2 2h3v1H2zM3 3h1v1H3z" fill="#000"/></svg><div style="position:absolute;left:2px;top:534px;width:180px;height:16px;background-color:#fff;background-image:linear-gradient(45deg,#D4D0C8 25%,transparent 25%,transparent 75%,#D4D0C8 75%),linear-gradient(45deg,#D4D0C8 25%,transparent 25%,transparent 75%,#D4D0C8 75%);background-size:2px 2px;background-position:0 0,1px 1px;"></div><div style="position:absolute;left:2px;top:534px;width:16px;height:16px;background:#D4D0C8;box-shadow:inset -1px -1px #404040, inset 1px 1px #D4D0C8, inset -2px -2px #808080, inset 2px 2px #fff;"></div><svg style="position:absolute;left:7px;top:538px" width="4" height="7" viewBox="0 0 4 7" shape-rendering="crispEdges"><path d="M3 0h1v7H3zM2 1h1v5H2zM1 2h1v3H1zM0 3h1v1H0z" fill="#000"/></svg><div style="position:absolute;left:18px;top:534px;width:132px;height:16px;background:#D4D0C8;box-shadow:inset -1px -1px #404040, inset 1px 1px #D4D0C8, inset -2px -2px #808080, inset 2px 2px #fff;"></div><div style="position:absolute;left:166px;top:534px;width:16px;height:16px;background:#D4D0C8;box-shadow:inset -1px -1px #404040, inset 1px 1px #D4D0C8, inset -2px -2px #808080, inset 2px 2px #fff;"></div><svg style="position:absolute;left:172px;top:538px" width="4" height="7" viewBox="0 0 4 7" shape-rendering="crispEdges"><path d="M0 0h1v7H0zM1 1h1v5H1zM2 2h1v3H2zM3 3h1v1H3z" fill="#000"/></svg><div style="position:absolute;left:182px;top:534px;width:16px;height:16px;background:#D4D0C8"></div><div style="position:absolute;left:200px;top:93px;width:4px;height:457px;background:#D4D0C8"></div><div style="position:absolute;left:204px;top:93px;width:596px;height:1px;background:#808080"></div><div style="position:absolute;left:204px;top:93px;width:1px;height:457px;background:#808080"></div><div style="position:absolute;left:205px;top:94px;width:594px;height:1px;background:#404040"></div><div style="position:absolute;left:205px;top:94px;width:1px;height:456px;background:#404040"></div><div style="position:absolute;left:798px;top:94px;width:1px;height:456px;background:#D4D0C8"></div><div style="position:absolute;left:799px;top:93px;width:1px;height:457px;background:#fff"></div><div style="position:absolute;left:206px;top:95px;width:592px;height:455px;background:#fff"></div><div style="position:absolute;left:206px;top:112px;width:180px;height:438px;background:#F7F7F7"></div><div style="position:absolute;left:206px;top:95px;width:179px;height:17px;background:#D4D0C8;box-shadow:inset 1px 1px #fff, inset -1px -1px #404040, inset -2px -2px #808080;"></div><div class="t" style="left:211px;top:96px;line-height:17px;width:169px;text-align:left">Name</div><div style="position:absolute;left:385px;top:95px;width:97px;height:17px;background:#D4D0C8;box-shadow:inset 1px 1px #fff, inset -1px -1px #404040, inset -2px -2px #808080;"></div><div class="t" style="left:390px;top:96px;line-height:17px;width:87px;text-align:right">Size</div><div style="position:absolute;left:482px;top:95px;width:120px;height:17px;background:#D4D0C8;box-shadow:inset 1px 1px #fff, inset -1px -1px #404040, inset -2px -2px #808080;"></div><div class="t" style="left:487px;top:96px;line-height:17px;width:110px;text-align:left">Type</div><div style="position:absolute;left:602px;top:95px;width:120px;height:17px;background:#D4D0C8;box-shadow:inset 1px 1px #fff, inset -1px -1px #404040, inset -2px -2px #808080;"></div><div class="t" style="left:607px;top:96px;line-height:17px;width:110px;text-align:left">Date Modified</div><div style="position:absolute;left:722px;top:95px;width:60px;height:17px;background:#D4D0C8;box-shadow:inset 1px 1px #fff, inset -1px -1px #404040, inset -2px -2px #808080;"></div><div class="t" style="left:727px;top:96px;line-height:17px;width:50px;text-align:left;letter-spacing:0.4px">Attributes</div><div style="position:absolute;left:782px;top:95px;width:16px;height:17px;background:#D4D0C8;box-shadow:inset 1px 1px #fff, inset 0 -1px #404040, inset 0 -2px #808080;"></div><svg style="position:absolute;left:248px;top:101px" width="7" height="4" viewBox="0 0 7 4" shape-rendering="crispEdges"><path d="M3 0h1v1H3zM2 1h3v1H2zM1 2h5v1H1zM0 3h7v1H0z" fill="#A0A0A0"/></svg><svg style="position:absolute;left:211px;top:112px" width="16" height="16"><use href="#dll"/></svg><div class="t sel" style="left:226px;top:112px;width:50px;height:17px;"></div><div class="t" style="left:228px;top:113px;line-height:17px;color:#fff;letter-spacing:0.32px">expat.dll</div><div class="t" style="left:385px;top:113px;line-height:17px;width:92px;text-align:right;letter-spacing:-0.2px">132 KB</div><div class="t" style="left:488px;top:113px;line-height:17px;letter-spacing:-0.12px">Application Extension</div><div class="t" style="left:607px;top:113px;line-height:17px;">4/14/2004 5:34 PM</div><div class="t" style="left:728px;top:113px;line-height:17px;">A</div><svg style="position:absolute;left:211px;top:129px" width="16" height="16"><use href="#dll"/></svg><div class="t sel" style="left:226px;top:129px;width:60px;height:17px;"></div><div class="t" style="left:228px;top:130px;line-height:17px;color:#fff;letter-spacing:-0.65px">FDFTK.DLL</div><div class="t" style="left:385px;top:130px;line-height:17px;width:92px;text-align:right;letter-spacing:-0.2px">408 KB</div><div class="t" style="left:488px;top:130px;line-height:17px;letter-spacing:-0.12px">Application Extension</div><div class="t" style="left:607px;top:130px;line-height:17px;">4/14/2004 5:34 PM</div><div class="t" style="left:728px;top:130px;line-height:17px;">A</div><svg style="position:absolute;left:211px;top:146px" width="16" height="16"><use href="#dll"/></svg><div class="t sel" style="left:226px;top:146px;width:48px;height:17px;"></div><div class="t" style="left:228px;top:147px;line-height:17px;color:#fff;letter-spacing:0.11px">fribidi.dll</div><div class="t" style="left:385px;top:147px;line-height:17px;width:92px;text-align:right;letter-spacing:-0.2px">88 KB</div><div class="t" style="left:488px;top:147px;line-height:17px;letter-spacing:-0.12px">Application Extension</div><div class="t" style="left:607px;top:147px;line-height:17px;">4/14/2004 5:34 PM</div><div class="t" style="left:728px;top:147px;line-height:17px;">A</div><svg style="position:absolute;left:211px;top:163px" width="16" height="16"><use href="#dll"/></svg><div class="t sel" style="left:226px;top:163px;width:51px;height:17px;"></div><div class="t" style="left:228px;top:164px;line-height:17px;color:#fff;letter-spacing:0.06px">gds32.dll</div><div class="t" style="left:385px;top:164px;line-height:17px;width:92px;text-align:right;letter-spacing:-0.2px">339 KB</div><div class="t" style="left:488px;top:164px;line-height:17px;letter-spacing:-0.12px">Application Extension</div><div class="t" style="left:607px;top:164px;line-height:17px;">4/14/2004 5:34 PM</div><div class="t" style="left:728px;top:164px;line-height:17px;">A</div><svg style="position:absolute;left:211px;top:180px" width="16" height="16"><use href="#dll"/></svg><div class="t sel" style="left:226px;top:180px;width:47px;height:17px;"></div><div class="t" style="left:228px;top:181px;line-height:17px;color:#fff;letter-spacing:0.2px">iconv.dll</div><div class="t" style="left:385px;top:181px;line-height:17px;width:92px;text-align:right;letter-spacing:-0.2px">852 KB</div><div class="t" style="left:488px;top:181px;line-height:17px;letter-spacing:-0.12px">Application Extension</div><div class="t" style="left:607px;top:181px;line-height:17px;">4/14/2004 5:34 PM</div><div class="t" style="left:728px;top:181px;line-height:17px;">A</div><svg style="position:absolute;left:211px;top:197px" width="16" height="16"><use href="#dll"/></svg><div class="t sel" style="left:226px;top:197px;width:62px;height:17px;"></div><div class="t" style="left:228px;top:198px;line-height:17px;color:#fff;letter-spacing:0.04px">libeay32.dll</div><div class="t" style="left:385px;top:198px;line-height:17px;width:92px;text-align:right;letter-spacing:-0.2px">856 KB</div><div class="t" style="left:488px;top:198px;line-height:17px;letter-spacing:-0.12px">Application Extension</div><div class="t" style="left:607px;top:198px;line-height:17px;">4/14/2004 5:34 PM</div><div class="t" style="left:728px;top:198px;line-height:17px;">A</div><svg style="position:absolute;left:211px;top:214px" width="16" height="16"><use href="#dll"/></svg><div class="t sel" style="left:226px;top:214px;width:56px;height:17px;"></div><div class="t" style="left:228px;top:215px;line-height:17px;color:#fff;letter-spacing:0.05px">libintl-1.dll</div><div class="t" style="left:385px;top:215px;line-height:17px;width:92px;text-align:right;letter-spacing:-0.2px">46 KB</div><div class="t" style="left:488px;top:215px;line-height:17px;letter-spacing:-0.12px">Application Extension</div><div class="t" style="left:607px;top:215px;line-height:17px;">4/14/2004 5:34 PM</div><div class="t" style="left:728px;top:215px;line-height:17px;">A</div><svg style="position:absolute;left:211px;top:231px" width="16" height="16"><use href="#dll"/></svg><div class="t sel" style="left:226px;top:231px;width:63px;height:17px;"></div><div class="t" style="left:228px;top:232px;line-height:17px;color:#fff;letter-spacing:-0.14px">libmhash.dll</div><div class="t" style="left:385px;top:232px;line-height:17px;width:92px;text-align:right;letter-spacing:-0.2px">162 KB</div><div class="t" style="left:488px;top:232px;line-height:17px;letter-spacing:-0.12px">Application Extension</div><div class="t" style="left:607px;top:232px;line-height:17px;">4/14/2004 5:34 PM</div><div class="t" style="left:728px;top:232px;line-height:17px;">A</div><svg style="position:absolute;left:211px;top:248px" width="16" height="16"><use href="#dll"/></svg><div class="t sel" style="left:226px;top:248px;width:65px;height:17px;"></div><div class="t" style="left:228px;top:249px;line-height:17px;color:#fff;letter-spacing:-0.3px">libmySQL.dll</div><div class="t" style="left:385px;top:249px;line-height:17px;width:92px;text-align:right;letter-spacing:-0.2px">196 KB</div><div class="t" style="left:488px;top:249px;line-height:17px;letter-spacing:-0.12px">Application Extension</div><div class="t" style="left:607px;top:249px;line-height:17px;">4/14/2004 5:34 PM</div><div class="t" style="left:728px;top:249px;line-height:17px;">A</div><svg style="position:absolute;left:211px;top:265px" width="16" height="16"><use href="#dll"/></svg><div class="t sel" style="left:226px;top:265px;width:49px;height:17px;"></div><div class="t" style="left:228px;top:266px;line-height:17px;color:#fff;letter-spacing:-0.39px">mSQL.dll</div><div class="t" style="left:385px;top:266px;line-height:17px;width:92px;text-align:right;letter-spacing:-0.2px">56 KB</div><div class="t" style="left:488px;top:266px;line-height:17px;letter-spacing:-0.12px">Application Extension</div><div class="t" style="left:607px;top:266px;line-height:17px;">4/14/2004 5:34 PM</div><div class="t" style="left:728px;top:266px;line-height:17px;">A</div><svg style="position:absolute;left:211px;top:282px" width="16" height="16"><use href="#dll"/></svg><div class="t sel" style="left:226px;top:282px;width:62px;height:17px;"></div><div class="t" style="left:228px;top:283px;line-height:17px;color:#fff;letter-spacing:0.1px">ntwdblib.dll</div><div class="t" style="left:385px;top:283px;line-height:17px;width:92px;text-align:right;letter-spacing:-0.2px">273 KB</div><div class="t" style="left:488px;top:283px;line-height:17px;letter-spacing:-0.12px">Application Extension</div><div class="t" style="left:607px;top:283px;line-height:17px;">4/14/2004 5:34 PM</div><div class="t" style="left:728px;top:283px;line-height:17px;">A</div><svg style="position:absolute;left:211px;top:299px" width="16" height="16"><use href="#dll"/></svg><div class="t sel" style="left:226px;top:299px;width:48px;height:17px;"></div><div class="t" style="left:228px;top:300px;line-height:17px;color:#fff;letter-spacing:0.13px">pdflib.dll</div><div class="t" style="left:385px;top:300px;line-height:17px;width:92px;text-align:right;letter-spacing:-0.2px">1,396 KB</div><div class="t" style="left:488px;top:300px;line-height:17px;letter-spacing:-0.12px">Application Extension</div><div class="t" style="left:607px;top:300px;line-height:17px;">4/14/2004 5:34 PM</div><div class="t" style="left:728px;top:300px;line-height:17px;">A</div><svg style="position:absolute;left:211px;top:316px" width="16" height="16"><use href="#dll"/></svg><div class="t sel" style="left:226px;top:316px;width:50px;height:17px;"></div><div class="t" style="left:228px;top:317px;line-height:17px;color:#fff;letter-spacing:0.01px">sablot.dll</div><div class="t" style="left:385px;top:317px;line-height:17px;width:92px;text-align:right;letter-spacing:-0.2px">376 KB</div><div class="t" style="left:488px;top:317px;line-height:17px;letter-spacing:-0.12px">Application Extension</div><div class="t" style="left:607px;top:317px;line-height:17px;">4/14/2004 5:34 PM</div><div class="t" style="left:728px;top:317px;line-height:17px;">A</div><svg style="position:absolute;left:211px;top:333px" width="16" height="16"><use href="#dll"/></svg><div class="t sel" style="left:226px;top:333px;width:62px;height:17px;"></div><div class="t" style="left:228px;top:334px;line-height:17px;color:#fff;letter-spacing:-0.18px">ssleay32.dll</div><div class="t" style="left:385px;top:334px;line-height:17px;width:92px;text-align:right;letter-spacing:-0.2px">156 KB</div><div class="t" style="left:488px;top:334px;line-height:17px;letter-spacing:-0.12px">Application Extension</div><div class="t" style="left:607px;top:334px;line-height:17px;">4/14/2004 5:34 PM</div><div class="t" style="left:728px;top:334px;line-height:17px;">A</div><svg style="position:absolute;left:211px;top:350px" width="16" height="16"><use href="#dll"/></svg><div class="t sel" style="left:226px;top:350px;width:39px;height:17px;"></div><div class="t" style="left:228px;top:351px;line-height:17px;color:#fff;letter-spacing:0.05px">Yaz.dll</div><div class="t" style="left:385px;top:351px;line-height:17px;width:92px;text-align:right;letter-spacing:-0.2px">352 KB</div><div class="t" style="left:488px;top:351px;line-height:17px;letter-spacing:-0.12px">Application Extension</div><div class="t" style="left:607px;top:351px;line-height:17px;">4/14/2004 5:34 PM</div><div class="t" style="left:728px;top:351px;line-height:17px;">A</div><div style="position:absolute;left:0px;top:550px;width:800px;height:1px;background:#fff"></div><div class="t" style="left:2px;top:555px;line-height:17px;white-space:nowrap;letter-spacing:-0.07px">Copies the selected items to the Clipboard. To put them in the new location, use the Paste command.</div><div style="position:absolute;left:0px;top:572px;width:800px;height:1px;background:#D4D0C8"></div><div style="position:absolute;left:0px;top:573px;width:800px;height:1px;background:#fff"></div><div style="position:absolute;left:2px;top:576px;width:52px;height:22px;background:#D4D0C8;box-shadow:inset -1px -1px #404040, inset 1px 1px #D4D0C8, inset -2px -2px #808080, inset 2px 2px #fff;"></div><svg style="position:absolute;left:4px;top:579px" width="15" height="14" viewBox="0 0 15 14" shape-rendering="crispEdges"><rect x="3" y="0" width="4" height="1" fill="#F05A24"/><rect x="2" y="1" width="7" height="1" fill="#F05A24"/><rect x="11" y="1" width="2" height="1" fill="#6ABF2A"/><rect x="2" y="2" width="7" height="1" fill="#F05A24"/><rect x="10" y="2" width="5" height="1" fill="#6ABF2A"/><rect x="2" y="3" width="7" height="1" fill="#F05A24"/><rect x="10" y="3" width="5" height="1" fill="#6ABF2A"/><rect x="2" y="4" width="7" height="1" fill="#F05A24"/><rect x="10" y="4" width="5" height="1" fill="#6ABF2A"/><rect x="1" y="5" width="3" height="1" fill="#3A8AE8"/><rect x="5" y="5" width="3" height="1" fill="#F05A24"/><rect x="9" y="5" width="6" height="1" fill="#6ABF2A"/><rect x="1" y="6" width="7" height="1" fill="#3A8AE8"/><rect x="9" y="6" width="5" height="1" fill="#6ABF2A"/><rect x="1" y="7" width="7" height="1" fill="#3A8AE8"/><rect x="9" y="7" width="4" height="1" fill="#6ABF2A"/><rect x="0" y="8" width="8" height="1" fill="#3A8AE8"/><rect x="9" y="8" width="4" height="1" fill="#FFC20E"/><rect x="0" y="9" width="7" height="1" fill="#3A8AE8"/><rect x="8" y="9" width="7" height="1" fill="#FFC20E"/><rect x="0" y="10" width="7" height="1" fill="#3A8AE8"/><rect x="8" y="10" width="7" height="1" fill="#FFC20E"/><rect x="0" y="11" width="7" height="1" fill="#3A8AE8"/><rect x="8" y="11" width="7" height="1" fill="#FFC20E"/><rect x="1" y="12" width="2" height="1" fill="#3A8AE8"/><rect x="6" y="12" width="1" height="1" fill="#3A8AE8"/><rect x="8" y="12" width="6" height="1" fill="#FFC20E"/><rect x="8" y="13" width="4" height="1" fill="#FFC20E"/></svg><div class="t" style="left:22px;top:579px;line-height:17px;font-weight:bold;letter-spacing:0.8px">Start</div><svg style="position:absolute;left:62px;top:579px" width="16" height="16"><use href="#desktop"/></svg><svg style="position:absolute;left:85px;top:579px" width="16" height="16" viewBox="0 0 16 16" shape-rendering="crispEdges"><rect x="11" y="0" width="4" height="1" fill="#8AC0F0"/><rect x="8" y="1" width="3" height="1" fill="#8AC0F0"/><rect x="14" y="1" width="1" height="1" fill="#8AC0F0"/><rect x="6" y="2" width="6" height="1" fill="#1E6AD8"/><rect x="14" y="2" width="1" height="1" fill="#8AC0F0"/><rect x="4" y="3" width="1" height="1" fill="#8AC0F0"/><rect x="5" y="3" width="8" height="1" fill="#1E6AD8"/><rect x="14" y="3" width="1" height="1" fill="#8AC0F0"/><rect x="3" y="4" width="1" height="1" fill="#8AC0F0"/><rect x="4" y="4" width="2" height="1" fill="#1E6AD8"/><rect x="6" y="4" width="4" height="1" fill="#FFFFFF"/><rect x="10" y="4" width="3" height="1" fill="#1E6AD8"/><rect x="13" y="4" width="1" height="1" fill="#8AC0F0"/><rect x="2" y="5" width="1" height="1" fill="#8AC0F0"/><rect x="3" y="5" width="2" height="1" fill="#1E6AD8"/><rect x="5" y="5" width="1" height="1" fill="#FFFFFF"/><rect x="10" y="5" width="1" height="1" fill="#FFFFFF"/><rect x="11" y="5" width="3" height="1" fill="#1E6AD8"/><rect x="2" y="6" width="1" height="1" fill="#8AC0F0"/><rect x="3" y="6" width="11" height="1" fill="#1E6AD8"/><rect x="1" y="7" width="1" height="1" fill="#8AC0F0"/><rect x="2" y="7" width="12" height="1" fill="#1E6AD8"/><rect x="1" y="8" width="1" height="1" fill="#8AC0F0"/><rect x="2" y="8" width="2" height="1" fill="#1E6AD8"/><rect x="4" y="8" width="9" height="1" fill="#FFFFFF"/><rect x="0" y="9" width="2" height="1" fill="#8AC0F0"/><rect x="2" y="9" width="2" height="1" fill="#1E6AD8"/><rect x="4" y="9" width="1" height="1" fill="#FFFFFF"/><rect x="10" y="9" width="1" height="1" fill="#FFFFFF"/><rect x="11" y="9" width="3" height="1" fill="#1E6AD8"/><rect x="0" y="10" width="1" height="1" fill="#8AC0F0"/><rect x="2" y="10" width="3" height="1" fill="#1E6AD8"/><rect x="5" y="10" width="1" height="1" fill="#FFFFFF"/><rect x="9" y="10" width="1" height="1" fill="#FFFFFF"/><rect x="10" y="10" width="4" height="1" fill="#1E6AD8"/><rect x="0" y="11" width="1" height="1" fill="#8AC0F0"/><rect x="3" y="11" width="10" height="1" fill="#1E6AD8"/><rect x="0" y="12" width="1" height="1" fill="#8AC0F0"/><rect x="4" y="12" width="8" height="1" fill="#1E6AD8"/><rect x="1" y="13" width="1" height="1" fill="#8AC0F0"/><rect x="3" y="13" width="1" height="1" fill="#8AC0F0"/><rect x="2" y="14" width="1" height="1" fill="#8AC0F0"/></svg><div style="position:absolute;left:141px;top:576px;width:161px;height:22px;background-color:#fff;background-image:linear-gradient(45deg,#D4D0C8 25%,transparent 25%,transparent 75%,#D4D0C8 75%),linear-gradient(45deg,#D4D0C8 25%,transparent 25%,transparent 75%,#D4D0C8 75%);background-size:2px 2px;background-position:0 0,1px 1px;box-shadow:inset 1px 1px #404040, inset -1px -1px #fff, inset 2px 2px #808080;"></div><svg style="position:absolute;left:146px;top:581px" width="16" height="16"><use href="#explorer"/></svg><div class="t" style="left:165px;top:580px;line-height:17px;font-weight:bold;letter-spacing:0.5px">C:\php\dlls</div><div style="position:absolute;left:304px;top:576px;width:161px;height:22px;background:#D4D0C8;box-shadow:inset -1px -1px #404040, inset 1px 1px #D4D0C8, inset -2px -2px #808080, inset 2px 2px #fff;"></div><svg style="position:absolute;left:308px;top:579px" width="16" height="16"><use href="#folder"/></svg><div class="t" style="left:328px;top:580px;line-height:17px;">C:\windows\system32</div><div style="position:absolute;left:664px;top:576px;width:134px;height:22px;box-shadow:inset 1px 1px #808080, inset -1px -1px #fff;"></div><svg style="position:absolute;left:669px;top:579px" width="12" height="16" viewBox="0 0 12 16" shape-rendering="crispEdges"><rect x="0" y="0" width="2" height="1" fill="#1A3AC8"/><rect x="4" y="0" width="3" height="1" fill="#1A3AC8"/><rect x="9" y="0" width="2" height="1" fill="#1A3AC8"/><rect x="0" y="1" width="5" height="1" fill="#1A3AC8"/><rect x="5" y="1" width="1" height="1" fill="#FFFFFF"/><rect x="6" y="1" width="5" height="1" fill="#1A3AC8"/><rect x="0" y="2" width="1" height="1" fill="#1A3AC8"/><rect x="1" y="2" width="9" height="1" fill="#FFFFFF"/><rect x="10" y="2" width="1" height="1" fill="#1A3AC8"/><rect x="11" y="2" width="1" height="1" fill="#0A1A60"/><rect x="0" y="3" width="1" height="1" fill="#1A3AC8"/><rect x="1" y="3" width="1" height="1" fill="#FFFFFF"/><rect x="2" y="3" width="2" height="1" fill="#E81818"/><rect x="4" y="3" width="4" height="1" fill="#FFFFFF"/><rect x="8" y="3" width="2" height="1" fill="#E81818"/><rect x="10" y="3" width="1" height="1" fill="#1A3AC8"/><rect x="11" y="3" width="1" height="1" fill="#0A1A60"/><rect x="0" y="4" width="1" height="1" fill="#1A3AC8"/><rect x="1" y="4" width="2" height="1" fill="#FFFFFF"/><rect x="3" y="4" width="2" height="1" fill="#E81818"/><rect x="5" y="4" width="2" height="1" fill="#FFFFFF"/><rect x="7" y="4" width="2" height="1" fill="#E81818"/><rect x="9" y="4" width="1" height="1" fill="#FFFFFF"/><rect x="10" y="4" width="1" height="1" fill="#1A3AC8"/><rect x="11" y="4" width="1" height="1" fill="#0A1A60"/><rect x="0" y="5" width="1" height="1" fill="#1A3AC8"/><rect x="1" y="5" width="2" height="1" fill="#FFFFFF"/><rect x="3" y="5" width="2" height="1" fill="#E81818"/><rect x="5" y="5" width="2" height="1" fill="#FFFFFF"/><rect x="7" y="5" width="2" height="1" fill="#E81818"/><rect x="9" y="5" width="1" height="1" fill="#FFFFFF"/><rect x="10" y="5" width="1" height="1" fill="#1A3AC8"/><rect x="11" y="5" width="1" height="1" fill="#0A1A60"/><rect x="0" y="6" width="1" height="1" fill="#1A3AC8"/><rect x="1" y="6" width="3" height="1" fill="#FFFFFF"/><rect x="4" y="6" width="4" height="1" fill="#E81818"/><rect x="8" y="6" width="2" height="1" fill="#FFFFFF"/><rect x="10" y="6" width="1" height="1" fill="#1A3AC8"/><rect x="11" y="6" width="1" height="1" fill="#0A1A60"/><rect x="0" y="7" width="1" height="1" fill="#1A3AC8"/><rect x="1" y="7" width="3" height="1" fill="#FFFFFF"/><rect x="4" y="7" width="4" height="1" fill="#E81818"/><rect x="8" y="7" width="2" height="1" fill="#FFFFFF"/><rect x="10" y="7" width="1" height="1" fill="#1A3AC8"/><rect x="11" y="7" width="1" height="1" fill="#0A1A60"/><rect x="0" y="8" width="1" height="1" fill="#1A3AC8"/><rect x="1" y="8" width="4" height="1" fill="#FFFFFF"/><rect x="5" y="8" width="2" height="1" fill="#E81818"/><rect x="7" y="8" width="3" height="1" fill="#FFFFFF"/><rect x="10" y="8" width="1" height="1" fill="#1A3AC8"/><rect x="11" y="8" width="1" height="1" fill="#0A1A60"/><rect x="0" y="9" width="1" height="1" fill="#1A3AC8"/><rect x="1" y="9" width="4" height="1" fill="#FFFFFF"/><rect x="5" y="9" width="2" height="1" fill="#E81818"/><rect x="7" y="9" width="3" height="1" fill="#FFFFFF"/><rect x="10" y="9" width="1" height="1" fill="#1A3AC8"/><rect x="11" y="9" width="1" height="1" fill="#0A1A60"/><rect x="0" y="10" width="2" height="1" fill="#1A3AC8"/><rect x="2" y="10" width="8" height="1" fill="#FFFFFF"/><rect x="10" y="10" width="1" height="1" fill="#1A3AC8"/><rect x="11" y="10" width="1" height="1" fill="#0A1A60"/><rect x="1" y="11" width="2" height="1" fill="#1A3AC8"/><rect x="3" y="11" width="6" height="1" fill="#FFFFFF"/><rect x="9" y="11" width="1" height="1" fill="#1A3AC8"/><rect x="10" y="11" width="1" height="1" fill="#0A1A60"/><rect x="2" y="12" width="2" height="1" fill="#1A3AC8"/><rect x="4" y="12" width="4" height="1" fill="#FFFFFF"/><rect x="8" y="12" width="1" height="1" fill="#1A3AC8"/><rect x="9" y="12" width="1" height="1" fill="#0A1A60"/><rect x="3" y="13" width="5" height="1" fill="#1A3AC8"/><rect x="8" y="13" width="1" height="1" fill="#0A1A60"/><rect x="4" y="14" width="3" height="1" fill="#1A3AC8"/><rect x="7" y="14" width="1" height="1" fill="#0A1A60"/><rect x="5" y="15" width="1" height="1" fill="#1A3AC8"/><rect x="6" y="15" width="1" height="1" fill="#0A1A60"/></svg><svg style="position:absolute;left:686px;top:579px" width="14" height="16" viewBox="0 0 14 16" shape-rendering="crispEdges"><rect x="6" y="0" width="7" height="1" fill="#7070D0"/><rect x="6" y="1" width="1" height="1" fill="#7070D0"/><rect x="7" y="1" width="5" height="1" fill="#58B8F0"/><rect x="12" y="1" width="1" height="1" fill="#7070D0"/><rect x="13" y="1" width="1" height="1" fill="#404060"/><rect x="6" y="2" width="1" height="1" fill="#7070D0"/><rect x="7" y="2" width="5" height="1" fill="#58B8F0"/><rect x="12" y="2" width="1" height="1" fill="#7070D0"/><rect x="13" y="2" width="1" height="1" fill="#404060"/><rect x="6" y="3" width="1" height="1" fill="#7070D0"/><rect x="7" y="3" width="5" height="1" fill="#58B8F0"/><rect x="12" y="3" width="1" height="1" fill="#7070D0"/><rect x="13" y="3" width="1" height="1" fill="#404060"/><rect x="0" y="4" width="7" height="1" fill="#7070D0"/><rect x="7" y="4" width="5" height="1" fill="#58B8F0"/><rect x="12" y="4" width="1" height="1" fill="#7070D0"/><rect x="13" y="4" width="1" height="1" fill="#404060"/><rect x="0" y="5" width="1" height="1" fill="#7070D0"/><rect x="1" y="5" width="5" height="1" fill="#58B8F0"/><rect x="6" y="5" width="1" height="1" fill="#7070D0"/><rect x="7" y="5" width="5" height="1" fill="#58B8F0"/><rect x="12" y="5" width="1" height="1" fill="#7070D0"/><rect x="13" y="5" width="1" height="1" fill="#404060"/><rect x="0" y="6" width="1" height="1" fill="#7070D0"/><rect x="1" y="6" width="5" height="1" fill="#58B8F0"/><rect x="6" y="6" width="1" height="1" fill="#7070D0"/><rect x="7" y="6" width="5" height="1" fill="#58B8F0"/><rect x="12" y="6" width="1" height="1" fill="#7070D0"/><rect x="13" y="6" width="1" height="1" fill="#404060"/><rect x="0" y="7" width="1" height="1" fill="#7070D0"/><rect x="1" y="7" width="5" height="1" fill="#58B8F0"/><rect x="6" y="7" width="7" height="1" fill="#7070D0"/><rect x="13" y="7" width="1" height="1" fill="#404060"/><rect x="0" y="8" width="1" height="1" fill="#7070D0"/><rect x="1" y="8" width="5" height="1" fill="#58B8F0"/><rect x="6" y="8" width="1" height="1" fill="#7070D0"/><rect x="9" y="8" width="3" height="1" fill="#7070D0"/><rect x="12" y="8" width="1" height="1" fill="#404060"/><rect x="0" y="9" width="1" height="1" fill="#7070D0"/><rect x="1" y="9" width="5" height="1" fill="#58B8F0"/><rect x="6" y="9" width="1" height="1" fill="#7070D0"/><rect x="7" y="9" width="1" height="1" fill="#404060"/><rect x="9" y="9" width="2" height="1" fill="#FFFFFF"/><rect x="11" y="9" width="1" height="1" fill="#7070D0"/><rect x="12" y="9" width="1" height="1" fill="#404060"/><rect x="0" y="10" width="7" height="1" fill="#7070D0"/><rect x="7" y="10" width="1" height="1" fill="#404060"/><rect x="9" y="10" width="3" height="1" fill="#7070D0"/><rect x="12" y="10" width="1" height="1" fill="#404060"/><rect x="2" y="11" width="3" height="1" fill="#7070D0"/><rect x="5" y="11" width="1" height="1" fill="#404060"/><rect x="9" y="11" width="3" height="1" fill="#404060"/><rect x="1" y="12" width="4" height="1" fill="#FFFFFF"/><rect x="5" y="12" width="1" height="1" fill="#7070D0"/><rect x="6" y="12" width="1" height="1" fill="#404060"/><rect x="0" y="13" width="1" height="1" fill="#7070D0"/><rect x="1" y="13" width="5" height="1" fill="#FFFFFF"/><rect x="6" y="13" width="1" height="1" fill="#7070D0"/><rect x="7" y="13" width="1" height="1" fill="#404060"/><rect x="1" y="14" width="5" height="1" fill="#7070D0"/><rect x="6" y="14" width="1" height="1" fill="#404060"/></svg><svg style="position:absolute;left:703px;top:579px" width="17" height="16" viewBox="0 0 17 16" shape-rendering="crispEdges"><rect x="0" y="0" width="2" height="1" fill="#FFFF00"/><rect x="0" y="1" width="1" height="1" fill="#FFFF00"/><rect x="1" y="1" width="1" height="1" fill="#C020C0"/><rect x="2" y="1" width="1" height="1" fill="#FF0000"/><rect x="1" y="2" width="1" height="1" fill="#FF0000"/><rect x="2" y="2" width="1" height="1" fill="#2020A0"/><rect x="3" y="2" width="1" height="1" fill="#FF0000"/><rect x="2" y="3" width="1" height="1" fill="#FF0000"/><rect x="3" y="3" width="1" height="1" fill="#2020A0"/><rect x="4" y="3" width="1" height="1" fill="#C020C0"/><rect x="5" y="3" width="1" height="1" fill="#FF0000"/><rect x="3" y="4" width="1" height="1" fill="#FF0000"/><rect x="4" y="4" width="2" height="1" fill="#2020A0"/><rect x="6" y="4" width="1" height="1" fill="#FF0000"/><rect x="4" y="5" width="1" height="1" fill="#FF0000"/><rect x="5" y="5" width="1" height="1" fill="#C020C0"/><rect x="6" y="5" width="1" height="1" fill="#2020A0"/><rect x="7" y="5" width="6" height="1" fill="#000000"/><rect x="5" y="6" width="1" height="1" fill="#FF0000"/><rect x="6" y="6" width="1" height="1" fill="#000000"/><rect x="7" y="6" width="6" height="1" fill="#FFFFFF"/><rect x="13" y="6" width="1" height="1" fill="#000000"/><rect x="5" y="7" width="1" height="1" fill="#000000"/><rect x="6" y="7" width="3" height="1" fill="#FFFFFF"/><rect x="9" y="7" width="1" height="1" fill="#109010"/><rect x="10" y="7" width="4" height="1" fill="#FFFFFF"/><rect x="14" y="7" width="1" height="1" fill="#000000"/><rect x="5" y="8" width="1" height="1" fill="#000000"/><rect x="6" y="8" width="3" height="1" fill="#FFFFFF"/><rect x="9" y="8" width="2" height="1" fill="#109010"/><rect x="11" y="8" width="3" height="1" fill="#FFFFFF"/><rect x="14" y="8" width="1" height="1" fill="#000000"/><rect x="5" y="9" width="1" height="1" fill="#000000"/><rect x="6" y="9" width="3" height="1" fill="#FFFFFF"/><rect x="9" y="9" width="3" height="1" fill="#109010"/><rect x="12" y="9" width="2" height="1" fill="#FFFFFF"/><rect x="14" y="9" width="1" height="1" fill="#000000"/><rect x="5" y="10" width="1" height="1" fill="#000000"/><rect x="6" y="10" width="3" height="1" fill="#FFFFFF"/><rect x="9" y="10" width="4" height="1" fill="#109010"/><rect x="13" y="10" width="1" height="1" fill="#FFFFFF"/><rect x="14" y="10" width="1" height="1" fill="#000000"/><rect x="5" y="11" width="1" height="1" fill="#000000"/><rect x="6" y="11" width="3" height="1" fill="#FFFFFF"/><rect x="9" y="11" width="3" height="1" fill="#109010"/><rect x="12" y="11" width="2" height="1" fill="#FFFFFF"/><rect x="14" y="11" width="1" height="1" fill="#000000"/><rect x="5" y="12" width="1" height="1" fill="#000000"/><rect x="6" y="12" width="3" height="1" fill="#FFFFFF"/><rect x="9" y="12" width="2" height="1" fill="#109010"/><rect x="11" y="12" width="3" height="1" fill="#FFFFFF"/><rect x="14" y="12" width="1" height="1" fill="#000000"/><rect x="5" y="13" width="1" height="1" fill="#000000"/><rect x="6" y="13" width="3" height="1" fill="#FFFFFF"/><rect x="9" y="13" width="1" height="1" fill="#109010"/><rect x="10" y="13" width="4" height="1" fill="#FFFFFF"/><rect x="14" y="13" width="1" height="1" fill="#000000"/><rect x="6" y="14" width="1" height="1" fill="#000000"/><rect x="7" y="14" width="6" height="1" fill="#FFFFFF"/><rect x="13" y="14" width="1" height="1" fill="#000000"/><rect x="7" y="15" width="6" height="1" fill="#000000"/></svg><svg style="position:absolute;left:722px;top:579px" width="14" height="16" viewBox="0 0 14 16" shape-rendering="crispEdges"><rect x="0" y="0" width="1" height="1" fill="#30B030"/><rect x="0" y="1" width="3" height="1" fill="#30B030"/><rect x="0" y="2" width="7" height="1" fill="#30B030"/><rect x="0" y="3" width="8" height="1" fill="#30B030"/><rect x="0" y="4" width="7" height="1" fill="#30B030"/><rect x="1" y="5" width="5" height="1" fill="#30B030"/><rect x="8" y="5" width="1" height="1" fill="#6A8AD0"/><rect x="3" y="6" width="2" height="1" fill="#30B030"/><rect x="7" y="6" width="3" height="1" fill="#6A8AD0"/><rect x="3" y="7" width="1" height="1" fill="#30B030"/><rect x="5" y="7" width="2" height="1" fill="#404040"/><rect x="7" y="7" width="2" height="1" fill="#6A8AD0"/><rect x="9" y="7" width="1" height="1" fill="#E8E8E8"/><rect x="10" y="7" width="1" height="1" fill="#6A8AD0"/><rect x="2" y="8" width="2" height="1" fill="#B0B0B0"/><rect x="4" y="8" width="3" height="1" fill="#404040"/><rect x="7" y="8" width="1" height="1" fill="#E8E8E8"/><rect x="8" y="8" width="1" height="1" fill="#6A8AD0"/><rect x="9" y="8" width="1" height="1" fill="#E8E8E8"/><rect x="10" y="8" width="2" height="1" fill="#6A8AD0"/><rect x="1" y="9" width="1" height="1" fill="#B0B0B0"/><rect x="2" y="9" width="3" height="1" fill="#E8E8E8"/><rect x="5" y="9" width="1" height="1" fill="#404040"/><rect x="6" y="9" width="4" height="1" fill="#E8E8E8"/><rect x="10" y="9" width="1" height="1" fill="#B0B0B0"/><rect x="11" y="9" width="1" height="1" fill="#707070"/><rect x="1" y="10" width="1" height="1" fill="#707070"/><rect x="2" y="10" width="1" height="1" fill="#B0B0B0"/><rect x="3" y="10" width="6" height="1" fill="#E8E8E8"/><rect x="9" y="10" width="1" height="1" fill="#B0B0B0"/><rect x="10" y="10" width="1" height="1" fill="#707070"/><rect x="2" y="11" width="1" height="1" fill="#707070"/><rect x="3" y="11" width="1" height="1" fill="#B0B0B0"/><rect x="4" y="11" width="4" height="1" fill="#E8E8E8"/><rect x="8" y="11" width="1" height="1" fill="#B0B0B0"/><rect x="9" y="11" width="1" height="1" fill="#707070"/><rect x="3" y="12" width="2" height="1" fill="#707070"/><rect x="5" y="12" width="1" height="1" fill="#B0B0B0"/><rect x="6" y="12" width="1" height="1" fill="#E8E8E8"/><rect x="7" y="12" width="1" height="1" fill="#B0B0B0"/><rect x="8" y="12" width="1" height="1" fill="#707070"/><rect x="5" y="13" width="3" height="1" fill="#707070"/></svg><div class="t" style="left:746px;top:579px;line-height:17px;">4:45 PM</div><div style="position:absolute;left:226px;top:299px;width:48px;height:17px;box-sizing:border-box;border:1px dotted #F5DB95"></div><div style="position:absolute;left:271px;top:302px;width:133px;height:204px;background:#D4D0C8;box-shadow:inset -1px -1px #404040, inset 1px 1px #D4D0C8, inset -2px -2px #808080, inset 2px 2px #fff;"></div><div class="t" style="left:291px;top:305px;line-height:17px;color:#000;font-weight:bold;letter-spacing:0.9px">Open Wit<u>h</u>...</div><div style="position:absolute;left:274px;top:325px;width:127px;height:1px;background:#808080"></div><div style="position:absolute;left:274px;top:326px;width:127px;height:1px;background:#fff"></div><div class="t" style="left:291px;top:331px;line-height:17px;color:#000">Scan for viruses...</div><svg style="position:absolute;left:277px;top:333px" width="10" height="13" viewBox="0 0 10 13" shape-rendering="crispEdges"><rect x="0" y="0" width="1" height="1" fill="#0000FF"/><rect x="4" y="0" width="2" height="1" fill="#0000FF"/><rect x="9" y="0" width="1" height="1" fill="#0000FF"/><rect x="0" y="1" width="9" height="1" fill="#0000FF"/><rect x="9" y="1" width="1" height="1" fill="#000"/><rect x="0" y="2" width="9" height="1" fill="#0000FF"/><rect x="9" y="2" width="1" height="1" fill="#000"/><rect x="0" y="3" width="2" height="1" fill="#0000FF"/><rect x="2" y="3" width="1" height="1" fill="#F4F4C8"/><rect x="3" y="3" width="4" height="1" fill="#0000FF"/><rect x="7" y="3" width="1" height="1" fill="#F4F4C8"/><rect x="8" y="3" width="1" height="1" fill="#0000FF"/><rect x="9" y="3" width="1" height="1" fill="#000"/><rect x="0" y="4" width="3" height="1" fill="#0000FF"/><rect x="3" y="4" width="1" height="1" fill="#F4F4C8"/><rect x="4" y="4" width="2" height="1" fill="#0000FF"/><rect x="6" y="4" width="1" height="1" fill="#F4F4C8"/><rect x="7" y="4" width="2" height="1" fill="#0000FF"/><rect x="9" y="4" width="1" height="1" fill="#000"/><rect x="0" y="5" width="3" height="1" fill="#0000FF"/><rect x="3" y="5" width="4" height="1" fill="#F4F4C8"/><rect x="7" y="5" width="2" height="1" fill="#0000FF"/><rect x="9" y="5" width="1" height="1" fill="#000"/><rect x="0" y="6" width="4" height="1" fill="#0000FF"/><rect x="4" y="6" width="2" height="1" fill="#F4F4C8"/><rect x="6" y="6" width="3" height="1" fill="#0000FF"/><rect x="9" y="6" width="1" height="1" fill="#000"/><rect x="0" y="7" width="4" height="1" fill="#0000FF"/><rect x="4" y="7" width="2" height="1" fill="#F4F4C8"/><rect x="6" y="7" width="3" height="1" fill="#0000FF"/><rect x="9" y="7" width="1" height="1" fill="#000"/><rect x="0" y="8" width="9" height="1" fill="#0000FF"/><rect x="9" y="8" width="1" height="1" fill="#000"/><rect x="0" y="9" width="1" height="1" fill="#000"/><rect x="1" y="9" width="8" height="1" fill="#0000FF"/><rect x="9" y="9" width="1" height="1" fill="#000"/><rect x="1" y="10" width="1" height="1" fill="#000"/><rect x="2" y="10" width="6" height="1" fill="#0000FF"/><rect x="8" y="10" width="1" height="1" fill="#000"/><rect x="2" y="11" width="1" height="1" fill="#000"/><rect x="3" y="11" width="4" height="1" fill="#0000FF"/><rect x="7" y="11" width="1" height="1" fill="#000"/><rect x="3" y="12" width="4" height="1" fill="#000"/></svg><div style="position:absolute;left:274px;top:351px;width:127px;height:1px;background:#808080"></div><div style="position:absolute;left:274px;top:352px;width:127px;height:1px;background:#fff"></div><div class="t" style="left:291px;top:357px;line-height:17px;color:#000">Se<u>n</u>d To</div><svg style="position:absolute;left:391px;top:362px" width="4" height="7" viewBox="0 0 4 7" shape-rendering="crispEdges"><path d="M0 0h1v7H0zM1 1h1v5H1zM2 2h1v3H2zM3 3h1v1H3z" fill="#000"/></svg><div style="position:absolute;left:274px;top:377px;width:127px;height:1px;background:#808080"></div><div style="position:absolute;left:274px;top:378px;width:127px;height:1px;background:#fff"></div><div class="t" style="left:291px;top:383px;line-height:17px;color:#000">Cu<u>t</u></div><div style="position:absolute;left:274px;top:400px;width:127px;height:17px;background:#0A246A"></div><div class="t" style="left:291px;top:400px;line-height:17px;color:#fff"><u>C</u>opy</div><div style="position:absolute;left:274px;top:420px;width:127px;height:1px;background:#808080"></div><div style="position:absolute;left:274px;top:421px;width:127px;height:1px;background:#fff"></div><div class="t" style="left:291px;top:426px;line-height:17px;color:#000">Create <u>S</u>hortcut</div><div class="t" style="left:291px;top:443px;line-height:17px;color:#000"><u>D</u>elete</div><div class="t" style="left:291px;top:460px;line-height:17px;color:#000">Rena<u>m</u>e</div><div style="position:absolute;left:274px;top:480px;width:127px;height:1px;background:#808080"></div><div style="position:absolute;left:274px;top:481px;width:127px;height:1px;background:#fff"></div><div class="t" style="left:291px;top:486px;line-height:17px;color:#000">P<u>r</u>operties</div><svg style="position:absolute;left:331px;top:405px" width="12" height="21" viewBox="0 0 12 21" shape-rendering="crispEdges"><rect x="0" y="0" width="1" height="1" fill="#000"/><rect x="0" y="1" width="2" height="1" fill="#000"/><rect x="0" y="2" width="1" height="1" fill="#000"/><rect x="1" y="2" width="1" height="1" fill="#fff"/><rect x="2" y="2" width="1" height="1" fill="#000"/><rect x="0" y="3" width="1" height="1" fill="#000"/><rect x="1" y="3" width="2" height="1" fill="#fff"/><rect x="3" y="3" width="1" height="1" fill="#000"/><rect x="0" y="4" width="1" height="1" fill="#000"/><rect x="1" y="4" width="3" height="1" fill="#fff"/><rect x="4" y="4" width="1" height="1" fill="#000"/><rect x="0" y="5" width="1" height="1" fill="#000"/><rect x="1" y="5" width="4" height="1" fill="#fff"/><rect x="5" y="5" width="1" height="1" fill="#000"/><rect x="0" y="6" width="1" height="1" fill="#000"/><rect x="1" y="6" width="5" height="1" fill="#fff"/><rect x="6" y="6" width="1" height="1" fill="#000"/><rect x="0" y="7" width="1" height="1" fill="#000"/><rect x="1" y="7" width="6" height="1" fill="#fff"/><rect x="7" y="7" width="1" height="1" fill="#000"/><rect x="0" y="8" width="1" height="1" fill="#000"/><rect x="1" y="8" width="7" height="1" fill="#fff"/><rect x="8" y="8" width="1" height="1" fill="#000"/><rect x="0" y="9" width="1" height="1" fill="#000"/><rect x="1" y="9" width="8" height="1" fill="#fff"/><rect x="9" y="9" width="1" height="1" fill="#000"/><rect x="0" y="10" width="1" height="1" fill="#000"/><rect x="1" y="10" width="9" height="1" fill="#fff"/><rect x="10" y="10" width="1" height="1" fill="#000"/><rect x="0" y="11" width="1" height="1" fill="#000"/><rect x="1" y="11" width="6" height="1" fill="#fff"/><rect x="7" y="11" width="5" height="1" fill="#000"/><rect x="0" y="12" width="1" height="1" fill="#000"/><rect x="1" y="12" width="3" height="1" fill="#fff"/><rect x="4" y="12" width="1" height="1" fill="#000"/><rect x="5" y="12" width="2" height="1" fill="#fff"/><rect x="7" y="12" width="1" height="1" fill="#000"/><rect x="0" y="13" width="1" height="1" fill="#000"/><rect x="1" y="13" width="2" height="1" fill="#fff"/><rect x="3" y="13" width="2" height="1" fill="#000"/><rect x="5" y="13" width="2" height="1" fill="#fff"/><rect x="7" y="13" width="1" height="1" fill="#000"/><rect x="0" y="14" width="1" height="1" fill="#000"/><rect x="1" y="14" width="1" height="1" fill="#fff"/><rect x="2" y="14" width="1" height="1" fill="#000"/><rect x="5" y="14" width="1" height="1" fill="#000"/><rect x="6" y="14" width="2" height="1" fill="#fff"/><rect x="8" y="14" width="1" height="1" fill="#000"/><rect x="0" y="15" width="2" height="1" fill="#000"/><rect x="5" y="15" width="1" height="1" fill="#000"/><rect x="6" y="15" width="2" height="1" fill="#fff"/><rect x="8" y="15" width="1" height="1" fill="#000"/><rect x="0" y="16" width="1" height="1" fill="#000"/><rect x="6" y="16" width="1" height="1" fill="#000"/><rect x="7" y="16" width="2" height="1" fill="#fff"/><rect x="9" y="16" width="1" height="1" fill="#000"/><rect x="6" y="17" width="1" height="1" fill="#000"/><rect x="7" y="17" width="2" height="1" fill="#fff"/><rect x="9" y="17" width="1" height="1" fill="#000"/><rect x="7" y="18" width="1" height="1" fill="#000"/><rect x="8" y="18" width="2" height="1" fill="#fff"/><rect x="10" y="18" width="1" height="1" fill="#000"/><rect x="7" y="19" width="1" height="1" fill="#000"/><rect x="8" y="19" width="2" height="1" fill="#fff"/><rect x="10" y="19" width="1" height="1" fill="#000"/><rect x="8" y="20" width="2" height="1" fill="#000"/></svg>
</body></html>
